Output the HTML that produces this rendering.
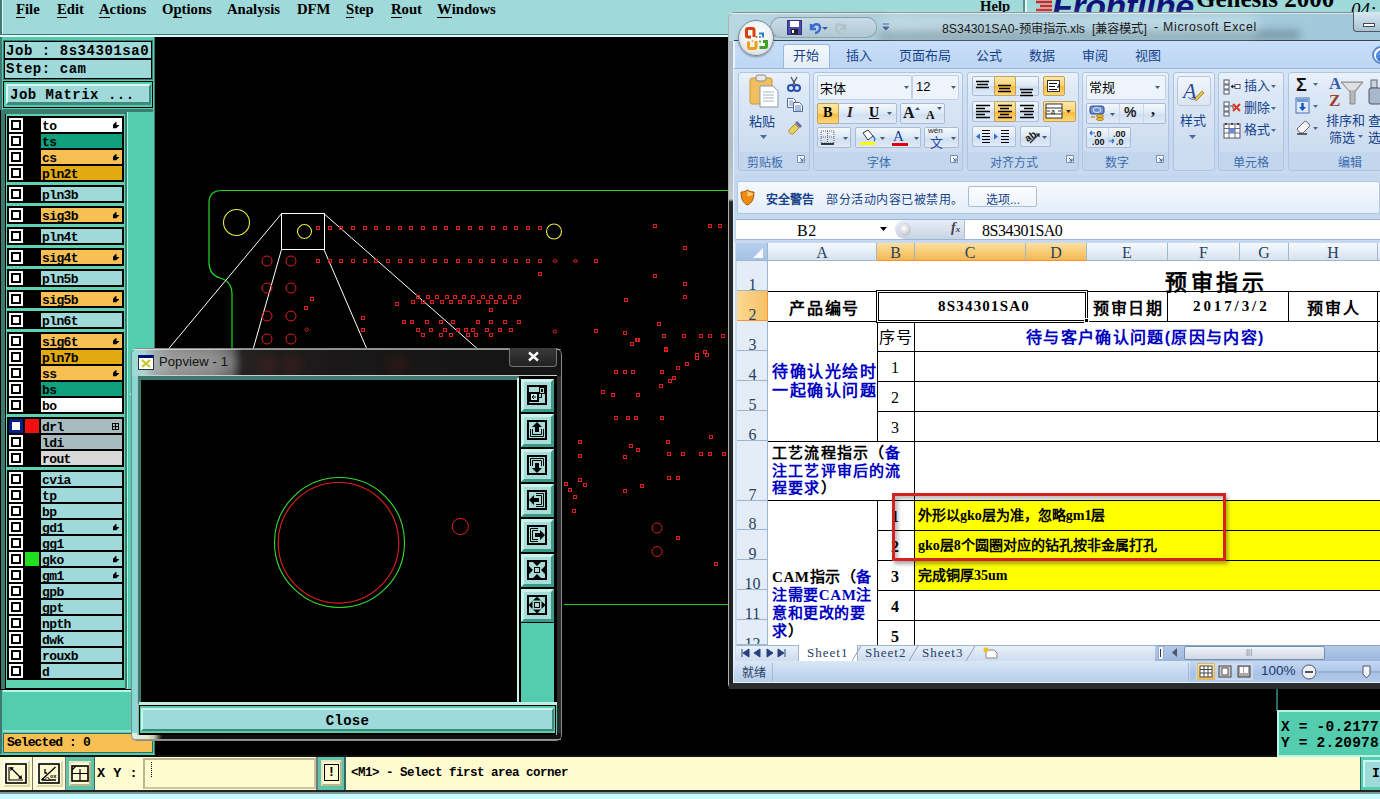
<!DOCTYPE html><html lang="zh-CN"><head><meta charset="utf-8"><style>
*,*:before,*:after{margin:0;padding:0;box-sizing:border-box}
html,body{width:1380px;height:799px;overflow:hidden;background:#000;position:relative;font-family:"Liberation Sans",sans-serif}
.a{position:absolute}
.mono{font-family:"Liberation Mono",monospace;font-weight:bold}
.mi{position:absolute;top:1px;font-family:"Liberation Serif",serif;font-weight:bold;font-size:14.7px;color:#000;line-height:17px}
.mi u{text-decoration:none;border-bottom:1px solid #000;display:inline-block;line-height:15px}
.cb{position:absolute;width:14px;height:14px;background:#fff}
.cb:after{content:"";position:absolute;left:2px;top:2px;width:10px;height:10px;border:2px solid #000}
.ln{position:absolute;height:14px;font-family:"Liberation Mono",monospace;font-weight:bold;font-size:13px;line-height:17px;padding-left:1px;color:#000;letter-spacing:-0.6px;overflow:hidden}
.arr{position:absolute;left:72px;top:4px;width:7px;height:7px}
</style></head><body>
<div class="a" style="left:0;top:0;width:1380px;height:35px;background:#9fd9d9"></div>
<div class="a" style="left:0;top:0;width:2px;height:37px;background:#3d7a72"></div>
<div class="a" style="left:2px;top:0;width:1px;height:35px;background:#e8ffff"></div>
<div class="a" style="left:2px;top:34px;width:1378px;height:1px;background:#3d7a72"></div>
<div class="a" style="left:0;top:35px;width:1380px;height:2px;background:#e0fafa"></div>
<div class="mi" style="left:16px"><u>F</u>ile</div>
<div class="mi" style="left:57px"><u>E</u>dit</div>
<div class="mi" style="left:99px"><u>A</u>ctions</div>
<div class="mi" style="left:162px">O<u>p</u>tions</div>
<div class="mi" style="left:227px">Analysis</div>
<div class="mi" style="left:297px">DFM</div>
<div class="mi" style="left:346px"><u>S</u>tep</div>
<div class="mi" style="left:391px"><u>R</u>out</div>
<div class="mi" style="left:437px"><u>W</u>indows</div>
<div class="mi" style="left:980px;top:-2px">Help</div>
<div class="a" style="left:1023px;top:0;width:2px;height:34px;background:#5a8a88"></div><div class="a" style="left:1025px;top:0;width:2px;height:34px;background:#e0f8f8"></div>
<svg class="a" style="left:1034px;top:0" width="20" height="14"><path d="M2 2 h16 M6 6 h12 M2 10 h16" stroke="#e02020" stroke-width="2.5"/></svg>
<div class="a" style="left:1052px;top:-11px;font:italic bold 34px/34px Liberation Sans;color:#10107a;letter-spacing:-0.4px">Frontline</div>
<div class="a" style="left:1196px;top:-14px;font:bold 25px/25px Liberation Serif;color:#000">Genesis 2000</div>
<div class="a" style="left:1351px;top:-1px;font:italic 19px/22px Liberation Serif;color:#000">04:</div>
<div class="a" style="left:0;top:37px;width:155px;height:720px;background:#53cdae"></div>
<div class="a" style="left:0;top:37px;width:2px;height:720px;background:#3d7a72"></div>
<div class="a" style="left:3px;top:40px;width:150px;height:40px;background:#3d7a72"></div>
<div class="a mono" style="left:4px;top:41px;width:148px;height:18px;background:#a0d9d9;border:1px solid #000;font-size:14px;line-height:19px;padding-left:1px;letter-spacing:0.55px">Job : 8s34301sa0</div>
<div class="a mono" style="left:4px;top:59px;width:148px;height:20px;background:#a0d9d9;border:1px solid #000;font-size:14px;line-height:19px;padding-left:1px;letter-spacing:0.55px">Step: cam</div>
<div class="a" style="left:3px;top:81px;width:150px;height:27px;background:#53cdae;border:1px solid #000"></div>
<div class="a mono" style="left:6px;top:84px;width:145px;height:21px;background:#a0d9d9;border-top:2px solid #d8f8f8;border-left:2px solid #d8f8f8;border-bottom:3px solid #3d8a7a;border-right:2px solid #3d8a7a;font-size:14px;line-height:19px;padding-left:2px;letter-spacing:0.5px">Job Matrix ...</div>
<div class="a" style="left:3px;top:109px;width:150px;height:3px;background:#3d7a72"></div>
<div class="a" style="left:0;top:110px;width:1px;height:580px;background:#000"></div>
<div class="a" style="left:1px;top:110px;width:4px;height:580px;background:#3d7a6e"></div>
<div class="a" style="left:1px;top:110px;width:126px;height:4px;background:#3d7a6e"></div>
<div class="a" style="left:5px;top:114px;width:1px;height:575px;background:#000"></div>
<div class="a" style="left:5px;top:688px;width:122px;height:1px;background:#000"></div>
<div class="a" style="left:6px;top:114px;width:119px;height:574px;background:#5fd2b2"></div>
<div class="a" style="left:125px;top:114px;width:2px;height:575px;background:#3d7a6e"></div>
<div class="a" style="left:127px;top:112px;width:1px;height:577px;background:#a8f4e4"></div>
<div class="a" style="left:128px;top:112px;width:26px;height:577px;background:#53cdae"></div>
<div class="a" style="left:154px;top:37px;width:1px;height:720px;background:#3d7a6e"></div>
<div class="a" style="left:7px;top:116px;width:117px;height:66px;background:#000"></div>
<div class="cb" style="left:9px;top:118px"></div>
<div class="ln" style="left:41px;top:118px;width:81px;background:#ffffff">to<svg class="arr" viewBox="0 0 8 8"><path d="M0 3 L3.2 0 H4 V3.4 H7 V4 L3.6 7 H0 Z" fill="#000"/></svg></div>
<div class="cb" style="left:9px;top:134px"></div>
<div class="ln" style="left:41px;top:134px;width:81px;background:#10a07e">ts</div>
<div class="cb" style="left:9px;top:150px"></div>
<div class="ln" style="left:41px;top:150px;width:81px;background:#f8c052">cs<svg class="arr" viewBox="0 0 8 8"><path d="M0 3 L3.2 0 H4 V3.4 H7 V4 L3.6 7 H0 Z" fill="#000"/></svg></div>
<div class="cb" style="left:9px;top:166px"></div>
<div class="ln" style="left:41px;top:166px;width:81px;background:#e0aa10">pln2t</div>
<div class="a" style="left:7px;top:185px;width:117px;height:18px;background:#000"></div>
<div class="cb" style="left:9px;top:187px"></div>
<div class="ln" style="left:41px;top:187px;width:81px;background:#a0d9d9">pln3b</div>
<div class="a" style="left:7px;top:206px;width:117px;height:18px;background:#000"></div>
<div class="cb" style="left:9px;top:208px"></div>
<div class="ln" style="left:41px;top:208px;width:81px;background:#f8c052">sig3b<svg class="arr" viewBox="0 0 8 8"><path d="M0 3 L3.2 0 H4 V3.4 H7 V4 L3.6 7 H0 Z" fill="#000"/></svg></div>
<div class="a" style="left:7px;top:227px;width:117px;height:18px;background:#000"></div>
<div class="cb" style="left:9px;top:229px"></div>
<div class="ln" style="left:41px;top:229px;width:81px;background:#a0d9d9">pln4t</div>
<div class="a" style="left:7px;top:248px;width:117px;height:18px;background:#000"></div>
<div class="cb" style="left:9px;top:250px"></div>
<div class="ln" style="left:41px;top:250px;width:81px;background:#f8c052">sig4t<svg class="arr" viewBox="0 0 8 8"><path d="M0 3 L3.2 0 H4 V3.4 H7 V4 L3.6 7 H0 Z" fill="#000"/></svg></div>
<div class="a" style="left:7px;top:269px;width:117px;height:18px;background:#000"></div>
<div class="cb" style="left:9px;top:271px"></div>
<div class="ln" style="left:41px;top:271px;width:81px;background:#a0d9d9">pln5b</div>
<div class="a" style="left:7px;top:290px;width:117px;height:18px;background:#000"></div>
<div class="cb" style="left:9px;top:292px"></div>
<div class="ln" style="left:41px;top:292px;width:81px;background:#f8c052">sig5b<svg class="arr" viewBox="0 0 8 8"><path d="M0 3 L3.2 0 H4 V3.4 H7 V4 L3.6 7 H0 Z" fill="#000"/></svg></div>
<div class="a" style="left:7px;top:311px;width:117px;height:18px;background:#000"></div>
<div class="cb" style="left:9px;top:313px"></div>
<div class="ln" style="left:41px;top:313px;width:81px;background:#a0d9d9">pln6t</div>
<div class="a" style="left:7px;top:332px;width:117px;height:82px;background:#000"></div>
<div class="cb" style="left:9px;top:334px"></div>
<div class="ln" style="left:41px;top:334px;width:81px;background:#f8c052">sig6t<svg class="arr" viewBox="0 0 8 8"><path d="M0 3 L3.2 0 H4 V3.4 H7 V4 L3.6 7 H0 Z" fill="#000"/></svg></div>
<div class="cb" style="left:9px;top:350px"></div>
<div class="ln" style="left:41px;top:350px;width:81px;background:#e0aa10">pln7b</div>
<div class="cb" style="left:9px;top:366px"></div>
<div class="ln" style="left:41px;top:366px;width:81px;background:#f8c052">ss<svg class="arr" viewBox="0 0 8 8"><path d="M0 3 L3.2 0 H4 V3.4 H7 V4 L3.6 7 H0 Z" fill="#000"/></svg></div>
<div class="cb" style="left:9px;top:382px"></div>
<div class="ln" style="left:41px;top:382px;width:81px;background:#10a07e">bs</div>
<div class="cb" style="left:9px;top:398px"></div>
<div class="ln" style="left:41px;top:398px;width:81px;background:#ffffff">bo</div>
<div class="a" style="left:7px;top:417px;width:117px;height:50px;background:#000"></div>
<div class="cb" style="left:9px;top:419px"></div>
<div class="a" style="left:9px;top:419px;width:14px;height:14px;background:#00208a"></div><div class="a" style="left:12px;top:422px;width:8px;height:8px;background:#fff"></div>
<div class="a" style="left:25px;top:419px;width:14px;height:14px;background:#f01010"></div>
<div class="ln" style="left:41px;top:419px;width:81px;background:#a8bcc0">drl<div class="a" style="right:3px;top:4px;width:7px;height:7px;border:1px solid #000;font-size:0"><div class="a" style="left:2px;top:0;width:1px;height:5px;background:#000"></div><div class="a" style="left:0;top:2px;width:5px;height:1px;background:#000"></div></div></div>
<div class="cb" style="left:9px;top:435px"></div>
<div class="ln" style="left:41px;top:435px;width:81px;background:#a8bcc0">ldi</div>
<div class="cb" style="left:9px;top:451px"></div>
<div class="ln" style="left:41px;top:451px;width:81px;background:#d8d8d8">rout</div>
<div class="a" style="left:7px;top:470px;width:117px;height:210px;background:#000"></div>
<div class="cb" style="left:9px;top:472px"></div>
<div class="ln" style="left:41px;top:472px;width:81px;background:#a0d9d9">cvia</div>
<div class="cb" style="left:9px;top:488px"></div>
<div class="ln" style="left:41px;top:488px;width:81px;background:#a0d9d9">tp</div>
<div class="cb" style="left:9px;top:504px"></div>
<div class="ln" style="left:41px;top:504px;width:81px;background:#a0d9d9">bp</div>
<div class="cb" style="left:9px;top:520px"></div>
<div class="ln" style="left:41px;top:520px;width:81px;background:#a0d9d9">gd1<svg class="arr" viewBox="0 0 8 8"><path d="M0 3 L3.2 0 H4 V3.4 H7 V4 L3.6 7 H0 Z" fill="#000"/></svg></div>
<div class="cb" style="left:9px;top:536px"></div>
<div class="ln" style="left:41px;top:536px;width:81px;background:#a0d9d9">gg1</div>
<div class="cb" style="left:9px;top:552px"></div>
<div class="a" style="left:25px;top:552px;width:14px;height:14px;background:#20e020"></div>
<div class="ln" style="left:41px;top:552px;width:81px;background:#a0d9d9">gko<svg class="arr" viewBox="0 0 8 8"><path d="M0 3 L3.2 0 H4 V3.4 H7 V4 L3.6 7 H0 Z" fill="#000"/></svg></div>
<div class="cb" style="left:9px;top:568px"></div>
<div class="ln" style="left:41px;top:568px;width:81px;background:#a0d9d9">gm1<svg class="arr" viewBox="0 0 8 8"><path d="M0 3 L3.2 0 H4 V3.4 H7 V4 L3.6 7 H0 Z" fill="#000"/></svg></div>
<div class="cb" style="left:9px;top:584px"></div>
<div class="ln" style="left:41px;top:584px;width:81px;background:#a0d9d9">gpb</div>
<div class="cb" style="left:9px;top:600px"></div>
<div class="ln" style="left:41px;top:600px;width:81px;background:#a0d9d9">gpt</div>
<div class="cb" style="left:9px;top:616px"></div>
<div class="ln" style="left:41px;top:616px;width:81px;background:#a0d9d9">npth</div>
<div class="cb" style="left:9px;top:632px"></div>
<div class="ln" style="left:41px;top:632px;width:81px;background:#a0d9d9">dwk</div>
<div class="cb" style="left:9px;top:648px"></div>
<div class="ln" style="left:41px;top:648px;width:81px;background:#a0d9d9">rouxb</div>
<div class="cb" style="left:9px;top:664px"></div>
<div class="ln" style="left:41px;top:664px;width:81px;background:#a0d9d9">d</div>
<div class="a" style="left:0;top:689px;width:154px;height:1px;background:#000"></div>
<div class="a" style="left:3px;top:690px;width:151px;height:2px;background:#b0f8e8"></div>
<div class="a" style="left:3px;top:730px;width:151px;height:2px;background:#8fe3d3"></div>
<div class="a mono" style="left:3px;top:733px;width:150px;height:20px;background:#f8c052;border:1px solid #2f6a62;font-size:13px;line-height:18px;padding-left:3px;letter-spacing:-0.9px">Selected : 0</div>
<div class="a" style="left:0;top:754px;width:155px;height:3px;background:#53cdae"></div>
<svg class="a" style="left:0;top:0" width="1380" height="799" viewBox="0 0 1380 799"><path d="M232 700 L232 295 Q232 281 220 278 Q209 275 209 262 L209 203 Q209 190.5 222 190.5 L1380 190.5" fill="none" stroke="#22dd22" stroke-width="1.2"/><line x1="564" y1="604.5" x2="730" y2="604.5" stroke="#22cc22" stroke-width="1.2"/><circle cx="236.5" cy="222.5" r="13" fill="none" stroke="#e8e840" stroke-width="1.1"/><circle cx="304.5" cy="231.5" r="7" fill="none" stroke="#e8e840" stroke-width="1.1"/><circle cx="554" cy="231.5" r="7.5" fill="none" stroke="#e8e840" stroke-width="1.1"/><rect x="281.5" y="213.5" width="43" height="36" fill="none" stroke="#fff" stroke-width="1"/><line x1="281.5" y1="213.7" x2="130" y2="395" stroke="#fff" stroke-width="1"/><line x1="281.5" y1="249.6" x2="240" y2="395" stroke="#fff" stroke-width="1"/><line x1="324" y1="249.6" x2="386.7" y2="395" stroke="#fff" stroke-width="1"/><line x1="324" y1="213.7" x2="530" y2="395" stroke="#fff" stroke-width="1"/><rect x="316.5" y="226.5" width="3" height="3" fill="none" stroke="#e02020" stroke-width="1"/><rect x="316.5" y="259.5" width="3" height="3" fill="none" stroke="#e02020" stroke-width="1"/><rect x="328.5" y="226.5" width="3" height="3" fill="none" stroke="#e02020" stroke-width="1"/><rect x="328.5" y="259.5" width="3" height="3" fill="none" stroke="#e02020" stroke-width="1"/><rect x="339.5" y="226.5" width="3" height="3" fill="none" stroke="#e02020" stroke-width="1"/><rect x="339.5" y="259.5" width="3" height="3" fill="none" stroke="#e02020" stroke-width="1"/><rect x="351.5" y="226.5" width="3" height="3" fill="none" stroke="#e02020" stroke-width="1"/><rect x="351.5" y="259.5" width="3" height="3" fill="none" stroke="#e02020" stroke-width="1"/><rect x="363.5" y="226.5" width="3" height="3" fill="none" stroke="#e02020" stroke-width="1"/><rect x="363.5" y="259.5" width="3" height="3" fill="none" stroke="#e02020" stroke-width="1"/><rect x="374.5" y="226.5" width="3" height="3" fill="none" stroke="#e02020" stroke-width="1"/><rect x="374.5" y="259.5" width="3" height="3" fill="none" stroke="#e02020" stroke-width="1"/><rect x="386.5" y="226.5" width="3" height="3" fill="none" stroke="#e02020" stroke-width="1"/><rect x="386.5" y="259.5" width="3" height="3" fill="none" stroke="#e02020" stroke-width="1"/><rect x="398.5" y="226.5" width="3" height="3" fill="none" stroke="#e02020" stroke-width="1"/><rect x="398.5" y="259.5" width="3" height="3" fill="none" stroke="#e02020" stroke-width="1"/><rect x="409.5" y="226.5" width="3" height="3" fill="none" stroke="#e02020" stroke-width="1"/><rect x="409.5" y="259.5" width="3" height="3" fill="none" stroke="#e02020" stroke-width="1"/><rect x="421.5" y="226.5" width="3" height="3" fill="none" stroke="#e02020" stroke-width="1"/><rect x="421.5" y="259.5" width="3" height="3" fill="none" stroke="#e02020" stroke-width="1"/><rect x="433.5" y="226.5" width="3" height="3" fill="none" stroke="#e02020" stroke-width="1"/><rect x="433.5" y="259.5" width="3" height="3" fill="none" stroke="#e02020" stroke-width="1"/><rect x="444.5" y="226.5" width="3" height="3" fill="none" stroke="#e02020" stroke-width="1"/><rect x="444.5" y="259.5" width="3" height="3" fill="none" stroke="#e02020" stroke-width="1"/><rect x="456.5" y="226.5" width="3" height="3" fill="none" stroke="#e02020" stroke-width="1"/><rect x="456.5" y="259.5" width="3" height="3" fill="none" stroke="#e02020" stroke-width="1"/><rect x="468.5" y="226.5" width="3" height="3" fill="none" stroke="#e02020" stroke-width="1"/><rect x="468.5" y="259.5" width="3" height="3" fill="none" stroke="#e02020" stroke-width="1"/><rect x="479.5" y="226.5" width="3" height="3" fill="none" stroke="#e02020" stroke-width="1"/><rect x="479.5" y="259.5" width="3" height="3" fill="none" stroke="#e02020" stroke-width="1"/><rect x="491.5" y="226.5" width="3" height="3" fill="none" stroke="#e02020" stroke-width="1"/><rect x="491.5" y="259.5" width="3" height="3" fill="none" stroke="#e02020" stroke-width="1"/><rect x="503.5" y="226.5" width="3" height="3" fill="none" stroke="#e02020" stroke-width="1"/><rect x="503.5" y="259.5" width="3" height="3" fill="none" stroke="#e02020" stroke-width="1"/><rect x="514.5" y="226.5" width="3" height="3" fill="none" stroke="#e02020" stroke-width="1"/><rect x="514.5" y="259.5" width="3" height="3" fill="none" stroke="#e02020" stroke-width="1"/><rect x="526.5" y="226.5" width="3" height="3" fill="none" stroke="#e02020" stroke-width="1"/><rect x="526.5" y="259.5" width="3" height="3" fill="none" stroke="#e02020" stroke-width="1"/><rect x="538.5" y="226.5" width="3" height="3" fill="none" stroke="#e02020" stroke-width="1"/><rect x="538.5" y="259.5" width="3" height="3" fill="none" stroke="#e02020" stroke-width="1"/><ellipse cx="555" cy="261" rx="2" ry="1.3" fill="none" stroke="#e02020"/><ellipse cx="575.5" cy="261" rx="2" ry="1.3" fill="none" stroke="#e02020"/><ellipse cx="555" cy="331.6" rx="1.8" ry="1.5" fill="none" stroke="#e02020"/><rect x="594.5" y="259.5" width="3" height="3" fill="none" stroke="#e02020" stroke-width="1"/><circle cx="267.0" cy="261.0" r="5" fill="none" stroke="#e02020" stroke-width="1"/><circle cx="291.0" cy="261.0" r="5" fill="none" stroke="#e02020" stroke-width="1"/><circle cx="267.0" cy="288.0" r="5" fill="none" stroke="#e02020" stroke-width="1"/><circle cx="291.0" cy="288.0" r="5" fill="none" stroke="#e02020" stroke-width="1"/><circle cx="267.0" cy="316.0" r="5" fill="none" stroke="#e02020" stroke-width="1"/><circle cx="291.0" cy="316.0" r="5" fill="none" stroke="#e02020" stroke-width="1"/><circle cx="267.0" cy="339.0" r="5" fill="none" stroke="#e02020" stroke-width="1"/><circle cx="291.0" cy="339.0" r="5" fill="none" stroke="#e02020" stroke-width="1"/><path d="M306.7 327.6 L308.7 329.6 L306.7 331.6 L304.7 329.6 Z" fill="none" stroke="#e02020"/><rect x="653.5" y="224.5" width="3" height="3" fill="none" stroke="#e02020" stroke-width="1"/><rect x="708.5" y="224.5" width="3" height="3" fill="none" stroke="#e02020" stroke-width="1"/><rect x="718.5" y="224.5" width="3" height="3" fill="none" stroke="#e02020" stroke-width="1"/><rect x="683.5" y="246.5" width="3" height="3" fill="none" stroke="#e02020" stroke-width="1"/><rect x="538.5" y="272.5" width="3" height="3" fill="none" stroke="#e02020" stroke-width="1"/><rect x="653.5" y="274.5" width="3" height="3" fill="none" stroke="#e02020" stroke-width="1"/><rect x="683.5" y="282.5" width="3" height="3" fill="none" stroke="#e02020" stroke-width="1"/><rect x="683.5" y="295.5" width="3" height="3" fill="none" stroke="#e02020" stroke-width="1"/><rect x="624.5" y="298.5" width="3" height="3" fill="none" stroke="#e02020" stroke-width="1"/><rect x="657.5" y="322.5" width="3" height="3" fill="none" stroke="#e02020" stroke-width="1"/><rect x="594.5" y="329.5" width="3" height="3" fill="none" stroke="#e02020" stroke-width="1"/><rect x="623.5" y="331.5" width="3" height="3" fill="none" stroke="#e02020" stroke-width="1"/><rect x="630.5" y="342.5" width="3" height="3" fill="none" stroke="#e02020" stroke-width="1"/><rect x="635.5" y="338.5" width="3" height="3" fill="none" stroke="#e02020" stroke-width="1"/><rect x="662.5" y="334.5" width="3" height="3" fill="none" stroke="#e02020" stroke-width="1"/><rect x="682.5" y="334.5" width="3" height="3" fill="none" stroke="#e02020" stroke-width="1"/><rect x="699.5" y="334.5" width="3" height="3" fill="none" stroke="#e02020" stroke-width="1"/><rect x="708.5" y="334.5" width="3" height="3" fill="none" stroke="#e02020" stroke-width="1"/><rect x="721.5" y="334.5" width="3" height="3" fill="none" stroke="#e02020" stroke-width="1"/><rect x="664.5" y="347.5" width="3" height="3" fill="none" stroke="#e02020" stroke-width="1"/><rect x="695.5" y="353.5" width="3" height="3" fill="none" stroke="#e02020" stroke-width="1"/><rect x="703.5" y="350.5" width="3" height="3" fill="none" stroke="#e02020" stroke-width="1"/><rect x="395.5" y="302.5" width="3" height="3" fill="none" stroke="#e02020" stroke-width="1"/><rect x="489.5" y="308.5" width="3" height="3" fill="none" stroke="#e02020" stroke-width="1"/><rect x="361.5" y="316.5" width="3" height="3" fill="none" stroke="#e02020" stroke-width="1"/><rect x="361.5" y="328.5" width="3" height="3" fill="none" stroke="#e02020" stroke-width="1"/><rect x="310.5" y="297.5" width="3" height="3" fill="none" stroke="#e02020" stroke-width="1"/><rect x="304.5" y="306.5" width="3" height="3" fill="none" stroke="#e02020" stroke-width="1"/><rect x="416.5" y="295.5" width="3" height="3" fill="none" stroke="#e02020" stroke-width="1"/><rect x="426.5" y="295.5" width="3" height="3" fill="none" stroke="#e02020" stroke-width="1"/><rect x="435.5" y="295.5" width="3" height="3" fill="none" stroke="#e02020" stroke-width="1"/><rect x="445.5" y="295.5" width="3" height="3" fill="none" stroke="#e02020" stroke-width="1"/><rect x="453.5" y="295.5" width="3" height="3" fill="none" stroke="#e02020" stroke-width="1"/><rect x="462.5" y="295.5" width="3" height="3" fill="none" stroke="#e02020" stroke-width="1"/><rect x="471.5" y="295.5" width="3" height="3" fill="none" stroke="#e02020" stroke-width="1"/><rect x="481.5" y="295.5" width="3" height="3" fill="none" stroke="#e02020" stroke-width="1"/><rect x="489.5" y="295.5" width="3" height="3" fill="none" stroke="#e02020" stroke-width="1"/><rect x="498.5" y="295.5" width="3" height="3" fill="none" stroke="#e02020" stroke-width="1"/><rect x="508.5" y="295.5" width="3" height="3" fill="none" stroke="#e02020" stroke-width="1"/><rect x="517.5" y="295.5" width="3" height="3" fill="none" stroke="#e02020" stroke-width="1"/><rect x="411.5" y="300.5" width="3" height="3" fill="none" stroke="#e02020" stroke-width="1"/><rect x="421.5" y="300.5" width="3" height="3" fill="none" stroke="#e02020" stroke-width="1"/><rect x="430.5" y="300.5" width="3" height="3" fill="none" stroke="#e02020" stroke-width="1"/><rect x="440.5" y="300.5" width="3" height="3" fill="none" stroke="#e02020" stroke-width="1"/><rect x="449.5" y="300.5" width="3" height="3" fill="none" stroke="#e02020" stroke-width="1"/><rect x="458.5" y="300.5" width="3" height="3" fill="none" stroke="#e02020" stroke-width="1"/><rect x="468.5" y="300.5" width="3" height="3" fill="none" stroke="#e02020" stroke-width="1"/><rect x="477.5" y="300.5" width="3" height="3" fill="none" stroke="#e02020" stroke-width="1"/><rect x="486.5" y="300.5" width="3" height="3" fill="none" stroke="#e02020" stroke-width="1"/><rect x="494.5" y="300.5" width="3" height="3" fill="none" stroke="#e02020" stroke-width="1"/><rect x="503.5" y="300.5" width="3" height="3" fill="none" stroke="#e02020" stroke-width="1"/><rect x="513.5" y="300.5" width="3" height="3" fill="none" stroke="#e02020" stroke-width="1"/><rect x="402.5" y="320.5" width="3" height="3" fill="none" stroke="#e02020" stroke-width="1"/><rect x="410.5" y="320.5" width="3" height="3" fill="none" stroke="#e02020" stroke-width="1"/><rect x="425.5" y="320.5" width="3" height="3" fill="none" stroke="#e02020" stroke-width="1"/><rect x="439.5" y="320.5" width="3" height="3" fill="none" stroke="#e02020" stroke-width="1"/><rect x="451.5" y="320.5" width="3" height="3" fill="none" stroke="#e02020" stroke-width="1"/><rect x="476.5" y="320.5" width="3" height="3" fill="none" stroke="#e02020" stroke-width="1"/><rect x="489.5" y="320.5" width="3" height="3" fill="none" stroke="#e02020" stroke-width="1"/><rect x="503.5" y="320.5" width="3" height="3" fill="none" stroke="#e02020" stroke-width="1"/><rect x="517.5" y="320.5" width="3" height="3" fill="none" stroke="#e02020" stroke-width="1"/><rect x="416.5" y="328.5" width="3" height="3" fill="none" stroke="#e02020" stroke-width="1"/><rect x="429.5" y="328.5" width="3" height="3" fill="none" stroke="#e02020" stroke-width="1"/><rect x="443.5" y="328.5" width="3" height="3" fill="none" stroke="#e02020" stroke-width="1"/><rect x="456.5" y="328.5" width="3" height="3" fill="none" stroke="#e02020" stroke-width="1"/><rect x="464.5" y="328.5" width="3" height="3" fill="none" stroke="#e02020" stroke-width="1"/><rect x="471.5" y="328.5" width="3" height="3" fill="none" stroke="#e02020" stroke-width="1"/><rect x="485.5" y="328.5" width="3" height="3" fill="none" stroke="#e02020" stroke-width="1"/><rect x="498.5" y="328.5" width="3" height="3" fill="none" stroke="#e02020" stroke-width="1"/><rect x="509.5" y="328.5" width="3" height="3" fill="none" stroke="#e02020" stroke-width="1"/><rect x="421.5" y="333.5" width="3" height="3" fill="none" stroke="#e02020" stroke-width="1"/><rect x="439.5" y="333.5" width="3" height="3" fill="none" stroke="#e02020" stroke-width="1"/><rect x="449.5" y="333.5" width="3" height="3" fill="none" stroke="#e02020" stroke-width="1"/><rect x="466.5" y="333.5" width="3" height="3" fill="none" stroke="#e02020" stroke-width="1"/><rect x="474.5" y="333.5" width="3" height="3" fill="none" stroke="#e02020" stroke-width="1"/><rect x="489.5" y="333.5" width="3" height="3" fill="none" stroke="#e02020" stroke-width="1"/><rect x="630.5" y="342.5" width="3" height="3" fill="none" stroke="#e02020" stroke-width="1"/><rect x="636.5" y="338.5" width="3" height="3" fill="none" stroke="#e02020" stroke-width="1"/><rect x="664.5" y="348.5" width="3" height="3" fill="none" stroke="#e02020" stroke-width="1"/><rect x="705.5" y="353.5" width="3" height="3" fill="none" stroke="#e02020" stroke-width="1"/><rect x="695.5" y="356.5" width="3" height="3" fill="none" stroke="#e02020" stroke-width="1"/><rect x="685.5" y="362.5" width="3" height="3" fill="none" stroke="#e02020" stroke-width="1"/><rect x="676.5" y="366.5" width="3" height="3" fill="none" stroke="#e02020" stroke-width="1"/><rect x="614.5" y="370.5" width="3" height="3" fill="none" stroke="#e02020" stroke-width="1"/><rect x="623.5" y="370.5" width="3" height="3" fill="none" stroke="#e02020" stroke-width="1"/><rect x="631.5" y="370.5" width="3" height="3" fill="none" stroke="#e02020" stroke-width="1"/><rect x="660.5" y="370.5" width="3" height="3" fill="none" stroke="#e02020" stroke-width="1"/><rect x="672.5" y="376.5" width="3" height="3" fill="none" stroke="#e02020" stroke-width="1"/><rect x="668.5" y="379.5" width="3" height="3" fill="none" stroke="#e02020" stroke-width="1"/><rect x="659.5" y="384.5" width="3" height="3" fill="none" stroke="#e02020" stroke-width="1"/><rect x="601.5" y="390.5" width="3" height="3" fill="none" stroke="#e02020" stroke-width="1"/><rect x="611.5" y="393.5" width="3" height="3" fill="none" stroke="#e02020" stroke-width="1"/><rect x="636.5" y="393.5" width="3" height="3" fill="none" stroke="#e02020" stroke-width="1"/><rect x="614.5" y="416.5" width="3" height="3" fill="none" stroke="#e02020" stroke-width="1"/><rect x="626.5" y="416.5" width="3" height="3" fill="none" stroke="#e02020" stroke-width="1"/><rect x="634.5" y="416.5" width="3" height="3" fill="none" stroke="#e02020" stroke-width="1"/><rect x="660.5" y="416.5" width="3" height="3" fill="none" stroke="#e02020" stroke-width="1"/><rect x="578.5" y="440.5" width="3" height="3" fill="none" stroke="#e02020" stroke-width="1"/><rect x="709.5" y="435.5" width="3" height="3" fill="none" stroke="#e02020" stroke-width="1"/><rect x="666.5" y="440.5" width="3" height="3" fill="none" stroke="#e02020" stroke-width="1"/><rect x="629.5" y="444.5" width="3" height="3" fill="none" stroke="#e02020" stroke-width="1"/><rect x="636.5" y="448.5" width="3" height="3" fill="none" stroke="#e02020" stroke-width="1"/><rect x="623.5" y="455.5" width="3" height="3" fill="none" stroke="#e02020" stroke-width="1"/><rect x="578.5" y="454.5" width="3" height="3" fill="none" stroke="#e02020" stroke-width="1"/><rect x="667.5" y="452.5" width="3" height="3" fill="none" stroke="#e02020" stroke-width="1"/><rect x="681.5" y="452.5" width="3" height="3" fill="none" stroke="#e02020" stroke-width="1"/><rect x="699.5" y="452.5" width="3" height="3" fill="none" stroke="#e02020" stroke-width="1"/><rect x="708.5" y="452.5" width="3" height="3" fill="none" stroke="#e02020" stroke-width="1"/><rect x="722.5" y="452.5" width="3" height="3" fill="none" stroke="#e02020" stroke-width="1"/><rect x="578.5" y="478.5" width="3" height="3" fill="none" stroke="#e02020" stroke-width="1"/><rect x="667.5" y="476.5" width="3" height="3" fill="none" stroke="#e02020" stroke-width="1"/><rect x="676.5" y="476.5" width="3" height="3" fill="none" stroke="#e02020" stroke-width="1"/><rect x="564.5" y="482.5" width="3" height="3" fill="none" stroke="#e02020" stroke-width="1"/><rect x="568.5" y="488.5" width="3" height="3" fill="none" stroke="#e02020" stroke-width="1"/><rect x="583.5" y="483.5" width="3" height="3" fill="none" stroke="#e02020" stroke-width="1"/><rect x="573.5" y="495.5" width="3" height="3" fill="none" stroke="#e02020" stroke-width="1"/><rect x="623.5" y="489.5" width="3" height="3" fill="none" stroke="#e02020" stroke-width="1"/><rect x="640.5" y="484.5" width="3" height="3" fill="none" stroke="#e02020" stroke-width="1"/><rect x="572.5" y="509.5" width="3" height="3" fill="none" stroke="#e02020" stroke-width="1"/><rect x="676.5" y="536.5" width="3" height="3" fill="none" stroke="#e02020" stroke-width="1"/><rect x="714.5" y="562.5" width="3" height="3" fill="none" stroke="#e02020" stroke-width="1"/><circle cx="657.0" cy="528.0" r="5" fill="none" stroke="#e02020" stroke-width="1"/><circle cx="657.0" cy="551.5" r="5" fill="none" stroke="#e02020" stroke-width="1"/></svg>
<div class="a" style="left:1276px;top:689px;width:2px;height:22px;background:#2f6a62"></div>
<div class="a" style="left:131px;top:348px;width:431px;height:393px;border-radius:7px 7px 6px 6px;background:linear-gradient(90deg,#7fd8d6 0px,#8fdcd8 8px,#2a2a2a 20px,#2a2a2a 100%);border:1px solid #8a8a8a"></div>
<div class="a" style="left:132px;top:349px;width:429px;height:27px;border-radius:6px 6px 0 0;overflow:hidden;background:linear-gradient(90deg,#9adcd8 0px,#a8d4d0 12px,#9aa8a6 24px,#8a8a8a 40px,#7a7a7a 80px,#5a5858 100px,#242222 110px,#1a1818 200px,#141414 100%)"><div class="a" style="left:20px;top:2px;width:85px;height:24px;border-radius:12px;background:rgba(190,190,190,0.35);filter:blur(5px)"></div><div class="a" style="left:125px;top:8px;width:20px;height:16px;border-radius:50%;background:rgba(150,30,30,0.2);filter:blur(5px)"></div><div class="a" style="left:150px;top:8px;width:20px;height:16px;border-radius:50%;background:rgba(150,30,30,0.2);filter:blur(5px)"></div><div class="a" style="left:255px;top:8px;width:22px;height:16px;border-radius:50%;background:rgba(140,30,30,0.18);filter:blur(5px)"></div></div>
<div class="a" style="left:132px;top:349px;width:429px;height:1px;background:rgba(255,255,255,0.55);border-radius:6px 6px 0 0"></div>
<div class="a" style="left:132px;top:733px;width:429px;height:7px;border-radius:0 0 5px 5px;background:linear-gradient(90deg,#d8f0e8 0px,#e8e8c8 15px,#c8c8a8 22px,#101010 30px,#111 100%)"></div>
<div class="a" style="left:132px;top:739px;width:429px;height:1px;background:#999"></div>
<div class="a" style="left:137px;top:375px;width:420px;height:360px;border:1px solid #bbb;border-top-color:#ccc"></div>
<div class="a" style="left:138px;top:355px;width:16px;height:15px;background:#fff;border:1px solid #333;border-top:3px solid #00107a"></div>
<svg class="a" style="left:140px;top:358px" width="12" height="11"><path d="M2 2 L10 9 M10 2 L2 9" stroke="#c8c830" stroke-width="2.2"/></svg>
<div class="a" style="left:159px;top:354px;font-size:13px;color:#111;letter-spacing:0.1px">Popview - 1</div>
<div class="a" style="left:509px;top:348px;width:48px;height:19px;border:1px solid #777;border-top:none;border-radius:0 0 4px 4px;background:linear-gradient(#3a3a3a,#222)"></div>
<svg class="a" style="left:527px;top:351px" width="13" height="11"><path d="M2 1.5 L11 9.5 M11 1.5 L2 9.5" stroke="#fff" stroke-width="2.4"/></svg>
<div class="a" style="left:138px;top:376px;width:419px;height:358px;background:#53cdae"></div>
<div class="a" style="left:138px;top:376px;width:381px;height:4px;background:#3d7a72"></div>
<div class="a" style="left:138px;top:376px;width:3px;height:328px;background:#3d7a72"></div>
<div class="a" style="left:141px;top:380px;width:376px;height:322px;background:#000"></div>
<div class="a" style="left:517px;top:378px;width:2px;height:326px;background:#c8f4ec"></div>
<div class="a" style="left:139px;top:702px;width:380px;height:2px;background:#c8f4ec"></div>
<div class="a" style="left:519px;top:376px;width:38px;height:328px;background:#000"></div>
<div class="a" style="left:521px;top:622px;width:33px;height:81px;background:#53cdae"></div>
<svg class="a" style="left:141px;top:380px" width="376" height="322"><circle cx="198.5" cy="162.5" r="65" fill="none" stroke="#33dd33" stroke-width="1.1"/><circle cx="197.5" cy="162.8" r="60.3" fill="none" stroke="#e02020" stroke-width="1.1"/><circle cx="319.3" cy="146.5" r="8.1" fill="none" stroke="#e02020" stroke-width="1"/></svg>
<div class="a" style="left:520px;top:378px;width:35px;height:35px;background:#53cdae;border:1px solid #000"></div>
<div class="a" style="left:521px;top:379px;width:33px;height:33px;background:#a8dcd8;border-top:3px solid #c8f4ec;border-left:3px solid #c8f4ec;border-bottom:3px solid #3a9a88;border-right:3px solid #3a9a88"></div>
<svg class="a" style="left:527px;top:385px" width="20" height="20" viewBox="0 0 20 20"><rect x="1" y="1" width="18" height="18" fill="none" stroke="#000" stroke-width="2"/><rect x="2" y="7" width="10" height="10" fill="#000"/><rect x="4" y="9" width="6" height="6" fill="#c8ece8"/><path d="M9 12 h-4 M7 10 l-2 2 2 2" stroke="#000" fill="none"/><rect x="12.5" y="2.5" width="5" height="6" fill="none" stroke="#000"/><rect x="14.5" y="4.5" width="1" height="2" fill="none" stroke="#000"/><path d="M12 12.5 h2.5 v-4" stroke="#000" fill="none"/></svg>
<div class="a" style="left:520px;top:413px;width:35px;height:35px;background:#53cdae;border:1px solid #000"></div>
<div class="a" style="left:521px;top:414px;width:33px;height:33px;background:#a8dcd8;border-top:3px solid #c8f4ec;border-left:3px solid #c8f4ec;border-bottom:3px solid #3a9a88;border-right:3px solid #3a9a88"></div>
<svg class="a" style="left:527px;top:420px" width="20" height="20" viewBox="0 0 20 20"><rect x="1" y="1" width="18" height="18" fill="none" stroke="#000" stroke-width="2"/><path d="M3.5 9 V16.5 H16.5 V9 M5.5 9 V14.5 H14.5 V9" stroke="#000" fill="none"/><path d="M10 2 L15 7 H12 V12 H8 V7 H5 Z" fill="#000"/></svg>
<div class="a" style="left:520px;top:448px;width:35px;height:35px;background:#53cdae;border:1px solid #000"></div>
<div class="a" style="left:521px;top:449px;width:33px;height:33px;background:#a8dcd8;border-top:3px solid #c8f4ec;border-left:3px solid #c8f4ec;border-bottom:3px solid #3a9a88;border-right:3px solid #3a9a88"></div>
<svg class="a" style="left:527px;top:455px" width="20" height="20" viewBox="0 0 20 20"><rect x="1" y="1" width="18" height="18" fill="none" stroke="#000" stroke-width="2"/><path d="M3.5 11 V3.5 H16.5 V11 M5.5 11 V5.5 H14.5 V11" stroke="#000" fill="none"/><path d="M10 18 L15 13 H12 V8 H8 V13 H5 Z" fill="#000"/></svg>
<div class="a" style="left:520px;top:483px;width:35px;height:35px;background:#53cdae;border:1px solid #000"></div>
<div class="a" style="left:521px;top:484px;width:33px;height:33px;background:#a8dcd8;border-top:3px solid #c8f4ec;border-left:3px solid #c8f4ec;border-bottom:3px solid #3a9a88;border-right:3px solid #3a9a88"></div>
<svg class="a" style="left:527px;top:490px" width="20" height="20" viewBox="0 0 20 20"><rect x="1" y="1" width="18" height="18" fill="none" stroke="#000" stroke-width="2"/><path d="M9 3.5 H16.5 V16.5 H9 M9 5.5 H14.5 V14.5 H9" stroke="#000" fill="none"/><path d="M2 10 L7 5 V8 H12 V12 H7 V15 Z" fill="#000"/></svg>
<div class="a" style="left:520px;top:518px;width:35px;height:35px;background:#53cdae;border:1px solid #000"></div>
<div class="a" style="left:521px;top:519px;width:33px;height:33px;background:#a8dcd8;border-top:3px solid #c8f4ec;border-left:3px solid #c8f4ec;border-bottom:3px solid #3a9a88;border-right:3px solid #3a9a88"></div>
<svg class="a" style="left:527px;top:525px" width="20" height="20" viewBox="0 0 20 20"><rect x="1" y="1" width="18" height="18" fill="none" stroke="#000" stroke-width="2"/><path d="M11 3.5 H3.5 V16.5 H11 M11 5.5 H5.5 V14.5 H11" stroke="#000" fill="none"/><path d="M18 10 L13 5 V8 H8 V12 H13 V15 Z" fill="#000"/></svg>
<div class="a" style="left:520px;top:553px;width:35px;height:35px;background:#53cdae;border:1px solid #000"></div>
<div class="a" style="left:521px;top:554px;width:33px;height:33px;background:#a8dcd8;border-top:3px solid #c8f4ec;border-left:3px solid #c8f4ec;border-bottom:3px solid #3a9a88;border-right:3px solid #3a9a88"></div>
<svg class="a" style="left:527px;top:560px" width="20" height="20" viewBox="0 0 20 20"><rect x="1" y="1" width="18" height="18" fill="none" stroke="#000" stroke-width="2"/><path d="M5 1 H15 L10 6 Z M5 19 H15 L10 14 Z M1 5 V15 L6 10 Z M19 5 V15 L14 10 Z" fill="#000"/><rect x="7.5" y="7.5" width="5" height="5" fill="none" stroke="#000"/></svg>
<div class="a" style="left:520px;top:588px;width:35px;height:35px;background:#53cdae;border:1px solid #000"></div>
<div class="a" style="left:521px;top:589px;width:33px;height:33px;background:#a8dcd8;border-top:3px solid #c8f4ec;border-left:3px solid #c8f4ec;border-bottom:3px solid #3a9a88;border-right:3px solid #3a9a88"></div>
<svg class="a" style="left:527px;top:595px" width="20" height="20" viewBox="0 0 20 20"><rect x="1" y="1" width="18" height="18" fill="none" stroke="#000" stroke-width="2"/><path d="M10 1.5 L14 5.5 H6 Z M10 18.5 L14 14.5 H6 Z M1.5 10 L5.5 6 V14 Z M18.5 10 L14.5 6 V14 Z" fill="#000"/><rect x="7.5" y="7.5" width="5" height="5" fill="none" stroke="#000"/></svg>
<div class="a" style="left:139px;top:702px;width:418px;height:3px;background:#c0f0e4"></div>
<div class="a" style="left:139px;top:705px;width:417px;height:30px;background:#000"></div>
<div class="a" style="left:140px;top:706px;width:415px;height:27px;background:#60c8a8"></div>
<div class="a mono" style="left:141px;top:708px;width:413px;height:23px;background:#9ddada;border-top:2px solid #c8f8f0;border-left:2px solid #c8f8f0;border-bottom:2px solid #3d8a7a;border-right:2px solid #3d8a7a;font-size:14px;line-height:22px;text-align:center;letter-spacing:0.3px">Close</div>
<div class="a" style="left:0;top:755px;width:1380px;height:2px;background:#111"></div>
<div class="a" style="left:0;top:757px;width:1380px;height:33px;background:#fffbd0"></div>
<div class="a" style="left:0px;top:757px;width:33px;height:33px;background:#fffbd0;border-right:1px solid #777"></div>
<div class="a" style="left:3px;top:760px;width:27px;height:27px;border:2px solid #d8d8b0;border-top-color:#fff;border-left-color:#fff"></div>
<svg class="a" style="left:5px;top:763px" width="22" height="21" viewBox="0 0 22 21"><rect x="1" y="1" width="20" height="19" fill="none" stroke="#000" stroke-width="1.6"/><path d="M4 4 V17 H18" stroke="#000" stroke-width="1.1" fill="none"/><path d="M6 5 L16 15" stroke="#000" stroke-width="1.2"/><path d="M5 4 l4 0.5 -3.5 3.5z M17 16 l-4 -0.5 3.5 -3.5z" fill="#000"/></svg>
<div class="a" style="left:33px;top:757px;width:33px;height:33px;background:#fffbd0;border-right:1px solid #777"></div>
<div class="a" style="left:36px;top:760px;width:27px;height:27px;border:2px solid #d8d8b0;border-top-color:#fff;border-left-color:#fff"></div>
<svg class="a" style="left:38px;top:763px" width="22" height="21" viewBox="0 0 22 21"><rect x="1" y="1" width="20" height="19" fill="none" stroke="#000" stroke-width="1.6"/><path d="M3.5 17 L17.5 4 M3.5 17 H18 M7 6 V10 H9" stroke="#000" stroke-width="1.3" fill="none"/><path d="M7 17 a3 3 0 0 1 4 -2 v2z" fill="#fff" stroke="#000" stroke-width="0.8"/><text x="12" y="15" font-size="5.5" font-family="Liberation Mono" font-weight="bold" fill="#000">ox</text></svg>
<div class="a" style="left:66px;top:757px;width:29px;height:33px;background:#5fc3a8;border-right:1px solid #2f6a62"></div>
<div class="a" style="left:69px;top:761px;width:22px;height:25px;background:#fffbd0;border:2px solid #b8b890;border-top-color:#e8e8c8;border-left-color:#e8e8c8"></div>
<svg class="a" style="left:69px;top:763px" width="22" height="21" viewBox="0 0 22 21"><rect x="3" y="3" width="16" height="15" fill="none" stroke="#000" stroke-width="1.6"/><path d="M3 10.5 h16 M11 6 v12 M3 7 l4 -4" stroke="#000" stroke-width="1.2" fill="none"/></svg>
<div class="a mono" style="left:97px;top:766px;font-size:13.5px;letter-spacing:0">X Y :</div>
<div class="a" style="left:143px;top:758px;width:173px;height:31px;background:#fffbd0;border:2px solid #c8c8a0;border-top-color:#b8b890;border-left-color:#b8b890"></div>
<div class="a" style="left:151px;top:762px;width:1px;height:15px;border-left:1px dotted #000"></div>
<div class="a" style="left:316px;top:757px;width:2px;height:33px;background:#777"></div>
<div class="a" style="left:318px;top:757px;width:28px;height:33px;background:#5fc3a8;border-right:2px solid #2f6a62"></div>
<div class="a" style="left:321px;top:760px;width:21px;height:26px;background:#fffbd0;border:2px solid #b8b890;border-top-color:#e8e8c8;border-left-color:#e8e8c8"></div>
<div class="a" style="left:324px;top:764px;width:15px;height:17px;border:1.5px solid #000;font:bold 13px/14px 'Liberation Sans';text-align:center">!</div>
<div class="a mono" style="left:351px;top:766px;font-size:12.5px;letter-spacing:-0.5px">&lt;M1&gt; - Select first area corner</div>
<div class="a" style="left:1360px;top:757px;width:20px;height:33px;background:#53cdae;border-left:1px solid #2f6a62"></div>
<div class="a" style="left:1363px;top:760px;width:17px;height:27px;background:#9fdada;border-top:2px solid #c8f8f4;border-left:2px solid #c8f8f4"></div>
<div class="a mono" style="left:1372px;top:766px;font-size:13px">I</div>
<div class="a" style="left:0;top:790px;width:1380px;height:2px;background:#222"></div>
<div class="a" style="left:0;top:792px;width:1380px;height:2px;background:#7a9a98"></div>
<div class="a" style="left:0;top:794px;width:1380px;height:5px;background:#c8fcfc"></div>
<div class="a" style="left:1277px;top:710px;width:103px;height:47px;background:#53cdae;border-top:2px solid #b8f4e4;border-left:2px solid #b8f4e4;border-bottom:2px solid #b8f4e4"></div>
<div class="a mono" style="left:1281px;top:719px;font-size:14.5px;line-height:16px;letter-spacing:0.2px;white-space:pre">X = -0.2177
Y = 2.20978</div>
<div class="a" style="left:728px;top:12px;width:660px;height:677px;border-radius:7px 7px 5px 5px;background:linear-gradient(#a8b8c0 0px,#b0bcc2 140px,#c4cacc 186px,#242628 189px,#202224 100%);border:1px solid #8a8a8a;border-left-color:#b0b0b0"></div>
<div class="a" style="left:734px;top:41px;width:646px;height:642px;background:#c8daf0"></div>
<div class="a" style="left:733px;top:41px;width:1px;height:642px;background:#e8f0f8"></div>
<div class="a" style="left:729px;top:13px;width:660px;height:28px;border-radius:6px 6px 0 0;background:linear-gradient(90deg,#b8d8e4 0%,#a8cad8 30%,#9ec4d6 45%,#a6cede 60%,#a0c8da 100%)"></div>
<div class="a" style="left:880px;top:30px;width:420px;height:10px;background:rgba(40,60,70,0.35);filter:blur(4px)"></div>
<div class="a" style="left:729px;top:13px;width:660px;height:1px;background:rgba(255,255,255,0.6)"></div>
<div class="a" style="left:734px;top:40px;width:646px;height:1px;background:#3a4650"></div>
<div class="a" style="left:770px;top:17px;width:107px;height:21px;border-radius:10px;border:1px solid rgba(90,110,120,0.5);background:linear-gradient(#c8dce6,#b0c8d4)"></div>
<svg class="a" style="left:787px;top:20px" width="15" height="15" viewBox="0 0 15 15"><rect x="0.5" y="0.5" width="14" height="14" fill="#4a4ab0" stroke="#303080"/><rect x="3" y="1" width="9" height="6" fill="#fff"/><rect x="4" y="9" width="7" height="5" fill="#222"/><rect x="5" y="10" width="2" height="3" fill="#fff"/></svg>
<svg class="a" style="left:808px;top:21px" width="40" height="14" viewBox="0 0 40 14"><path d="M3 3 v5 h5 M3.5 7.5 C6 2 12 2 12 7 C12 10 9 12 7 12" fill="none" stroke="#3a6ad0" stroke-width="2.4"/><path d="M14 6 l3 3 3-3z" fill="#3a5a90"/><path d="M37 3 v5 h-5 M36.5 7.5 C34 2 28 2 28 7 C28 10 31 12 33 12" fill="none" stroke="#b0c0c8" stroke-width="2.2"/></svg>
<svg class="a" style="left:882px;top:22px" width="8" height="10"><path d="M1 2 h6 M1 5 l3 3 3-3z" stroke="#203080" fill="#203080"/></svg>
<div class="a" style="left:880px;top:15px;width:380px;height:22px;border-radius:11px;background:rgba(235,245,250,0.35);filter:blur(6px)"></div>
<div class="a" style="left:942px;top:19px;white-space:nowrap;font-size:12.3px;color:#1a1a1a;white-space:nowrap">8S34301SA0-预审指示.xls</div>
<div class="a" style="left:1092px;top:19px;white-space:nowrap;font-size:12.3px;color:#1a1a1a;white-space:nowrap">[兼容模式]</div>
<div class="a" style="left:1154px;top:20px;white-space:nowrap;font-size:12.3px;color:#1a1a1a;white-space:nowrap">-</div>
<div class="a" style="left:1163px;top:20px;white-space:nowrap;font-size:12.3px;color:#1a1a1a;white-space:nowrap;letter-spacing:0.7px">Microsoft Excel</div>
<div class="a" style="left:1353px;top:12px;width:30px;height:20px;border:1px solid #556;border-top:none;border-radius:0 0 4px 4px;background:linear-gradient(#d8e8f0,#a8c4d4)"></div>
<div class="a" style="left:1363px;top:23px;width:12px;height:4px;background:#fff;border:1px solid #445"></div>
<div class="a" style="left:734px;top:41px;width:646px;height:28px;background:linear-gradient(#c8defa,#bed6f2)"></div>
<div class="a" style="left:734px;top:41px;width:1px;height:640px;background:#eef4fa"></div>
<div class="a" style="left:783px;top:44px;width:47px;height:26px;border:1px solid #9ab8dc;border-bottom:none;border-radius:3px 3px 0 0;background:linear-gradient(#f4f8fc,#e2ecf8)"></div>
<div class="a" style="left:793px;top:45px;font-size:13px;color:#15428b;white-space:nowrap">开始</div>
<div class="a" style="left:846px;top:45px;font-size:13px;color:#15428b;white-space:nowrap">插入</div>
<div class="a" style="left:899px;top:45px;font-size:13px;color:#15428b;white-space:nowrap">页面布局</div>
<div class="a" style="left:976px;top:45px;font-size:13px;color:#15428b;white-space:nowrap">公式</div>
<div class="a" style="left:1029px;top:45px;font-size:13px;color:#15428b;white-space:nowrap">数据</div>
<div class="a" style="left:1082px;top:45px;font-size:13px;color:#15428b;white-space:nowrap">审阅</div>
<div class="a" style="left:1135px;top:45px;font-size:13px;color:#15428b;white-space:nowrap">视图</div>
<div class="a" style="left:1372px;top:46px;width:18px;height:18px;border-radius:50%;background:#fff;border:2px solid #5a8ad0"></div><div class="a" style="left:1376px;top:50px;width:12px;height:12px;border-radius:50%;background:radial-gradient(circle at 40% 35%,#6aa8ff,#1a4ab0)"></div>
<div class="a" style="left:738px;top:20px;width:36px;height:36px;border-radius:50%;background:radial-gradient(circle at 50% 40%,#ffffff 0%,#f0f2f4 50%,#c8d0d6 100%);border:1px solid #7a8a96;box-shadow:0 1px 2px rgba(0,0,0,0.35)"></div>
<svg class="a" style="left:738px;top:20px" width="36" height="36" viewBox="0 0 36 36"><path d="M16 17 V10 Q16 8.5 14.5 8.5 H10 Q8.5 8.5 8.5 10 V15.5 Q8.5 17 10 17 H13" fill="none" stroke="#d8400a" stroke-width="3"/><path d="M21 13.5 H25 V17.5" fill="none" stroke="#2a80d0" stroke-width="2"/><circle cx="22" cy="17" r="1" fill="#2a80d0"/><circle cx="18.5" cy="17" r="1.1" fill="#e06020"/><path d="M18 21 V27 Q18 28.5 16.5 28.5 H12 Q10.5 28.5 10.5 27 V21.5" fill="none" stroke="#f0a018" stroke-width="3"/><circle cx="14.5" cy="21" r="1" fill="#f0b030"/><path d="M21.5 27.5 H27 Q28.5 27.5 28.5 26 V21.5 H25" fill="none" stroke="#40a028" stroke-width="3"/><circle cx="22" cy="21.5" r="1" fill="#40a028"/></svg>
<div class="a" style="left:734px;top:68px;width:646px;height:106px;background:linear-gradient(#d6e4f6,#c6d8f0 70%,#c8daf2)"></div>
<div class="a" style="left:734px;top:68px;width:646px;height:1px;background:#9ab8dc"></div>
<div class="a" style="left:738px;top:72px;width:72px;height:99px;border:1px solid #aec4e0;border-radius:3px;background:linear-gradient(#eaf1fa 0%,#dce8f6 20%,#cddcf0 80%)"></div>
<div class="a" style="left:739px;top:152px;width:70px;height:18px;background:#c2d6ee;border-radius:0 0 3px 3px"></div>
<div class="a" style="left:729px;top:153px;width:72px;text-align:center;font-size:12px;color:#3e6aaa">剪贴板</div>
<svg class="a" style="left:797px;top:155px" width="9" height="9"><path d="M0.5 0.5 h7 v7 h-7z" fill="#f4f8fc" stroke="#7a90b0"/><path d="M3 3 l3 3 M6 3.5 v2.5 h-2.5" stroke="#3a5a80" fill="none"/></svg>
<div class="a" style="left:813px;top:72px;width:150px;height:99px;border:1px solid #aec4e0;border-radius:3px;background:linear-gradient(#eaf1fa 0%,#dce8f6 20%,#cddcf0 80%)"></div>
<div class="a" style="left:814px;top:152px;width:148px;height:18px;background:#c2d6ee;border-radius:0 0 3px 3px"></div>
<div class="a" style="left:804px;top:153px;width:150px;text-align:center;font-size:12px;color:#3e6aaa">字体</div>
<svg class="a" style="left:950px;top:155px" width="9" height="9"><path d="M0.5 0.5 h7 v7 h-7z" fill="#f4f8fc" stroke="#7a90b0"/><path d="M3 3 l3 3 M6 3.5 v2.5 h-2.5" stroke="#3a5a80" fill="none"/></svg>
<div class="a" style="left:967px;top:72px;width:112px;height:99px;border:1px solid #aec4e0;border-radius:3px;background:linear-gradient(#eaf1fa 0%,#dce8f6 20%,#cddcf0 80%)"></div>
<div class="a" style="left:968px;top:152px;width:110px;height:18px;background:#c2d6ee;border-radius:0 0 3px 3px"></div>
<div class="a" style="left:958px;top:153px;width:112px;text-align:center;font-size:12px;color:#3e6aaa">对齐方式</div>
<svg class="a" style="left:1066px;top:155px" width="9" height="9"><path d="M0.5 0.5 h7 v7 h-7z" fill="#f4f8fc" stroke="#7a90b0"/><path d="M3 3 l3 3 M6 3.5 v2.5 h-2.5" stroke="#3a5a80" fill="none"/></svg>
<div class="a" style="left:1082px;top:72px;width:87px;height:99px;border:1px solid #aec4e0;border-radius:3px;background:linear-gradient(#eaf1fa 0%,#dce8f6 20%,#cddcf0 80%)"></div>
<div class="a" style="left:1083px;top:152px;width:85px;height:18px;background:#c2d6ee;border-radius:0 0 3px 3px"></div>
<div class="a" style="left:1073px;top:153px;width:87px;text-align:center;font-size:12px;color:#3e6aaa">数字</div>
<svg class="a" style="left:1156px;top:155px" width="9" height="9"><path d="M0.5 0.5 h7 v7 h-7z" fill="#f4f8fc" stroke="#7a90b0"/><path d="M3 3 l3 3 M6 3.5 v2.5 h-2.5" stroke="#3a5a80" fill="none"/></svg>
<div class="a" style="left:1173px;top:72px;width:42px;height:99px;border:1px solid #aec4e0;border-radius:3px;background:linear-gradient(#eaf1fa 0%,#dce8f6 20%,#cddcf0 80%)"></div>
<div class="a" style="left:1218px;top:72px;width:66px;height:99px;border:1px solid #aec4e0;border-radius:3px;background:linear-gradient(#eaf1fa 0%,#dce8f6 20%,#cddcf0 80%)"></div>
<div class="a" style="left:1219px;top:152px;width:64px;height:18px;background:#c2d6ee;border-radius:0 0 3px 3px"></div>
<div class="a" style="left:1218px;top:153px;width:66px;text-align:center;font-size:12px;color:#3e6aaa">单元格</div>
<div class="a" style="left:1288px;top:72px;width:124px;height:99px;border:1px solid #aec4e0;border-radius:3px;background:linear-gradient(#eaf1fa 0%,#dce8f6 20%,#cddcf0 80%)"></div>
<div class="a" style="left:1289px;top:152px;width:122px;height:18px;background:#c2d6ee;border-radius:0 0 3px 3px"></div>
<div class="a" style="left:1288px;top:153px;width:124px;text-align:center;font-size:12px;color:#3e6aaa">编辑</div>
<svg class="a" style="left:749px;top:74px" width="30" height="34" viewBox="0 0 30 34"><rect x="1" y="4" width="22" height="26" rx="2" fill="#f0c060" stroke="#c89838"/><rect x="7" y="1" width="10" height="6" rx="2" fill="#e8e8e8" stroke="#888"/><path d="M11 12 h13 l5 5 v16 h-18z" fill="#fff" stroke="#8a98a8"/><path d="M14 18 h11 M14 21 h11 M14 24 h11 M14 27 h11" stroke="#a8b4c0"/></svg>
<div class="a" style="left:749px;top:111px;white-space:nowrap;font-size:13px;color:#15428b">粘贴</div>
<svg class="a" style="left:760px;top:135px" width="8" height="5"><path d="M0 0 h7 l-3.5 4z" fill="#4a6a9a"/></svg>
<svg class="a" style="left:786px;top:76px" width="16" height="16" viewBox="0 0 16 16"><path d="M5 1 l5 9 M11 1 l-5 9" stroke="#556" stroke-width="1.4"/><circle cx="5" cy="12" r="3" fill="none" stroke="#2a50b0" stroke-width="2"/><circle cx="11" cy="12" r="3" fill="none" stroke="#2a50b0" stroke-width="2"/></svg>
<svg class="a" style="left:786px;top:97px" width="18" height="16" viewBox="0 0 18 16"><path d="M1.5 1.5 h6 l2 2 v7 h-8z" fill="#fff" stroke="#4a6aa8"/><path d="M3 4 h4 M3 6 h4 M3 8 h4" stroke="#4a6aa8" stroke-width="0.8"/><path d="M7.5 5.5 h6 l3 3 v6 h-9z" fill="#fff" stroke="#4a6aa8"/><path d="M9 9 h6 M9 11 h6 M9 13 h6" stroke="#4a6aa8" stroke-width="0.9"/></svg>
<svg class="a" style="left:787px;top:119px" width="17" height="17" viewBox="0 0 17 17"><path d="M10 2 l5 5 -2 2 -5 -5z" fill="#6a6aa0"/><path d="M8 5 l4 4 -6 6 c-2 1 -5 -2 -4 -4z" fill="#e8d060" stroke="#a89030"/></svg>
<div class="a" style="left:817px;top:75px;width:95px;height:25px;background:#eef4fb;border:1px solid #c0d0e4;border-radius:2px"></div>
<div class="a" style="left:912px;top:75px;width:47px;height:25px;background:#eef4fb;border:1px solid #c0d0e4;border-radius:2px"></div>
<div class="a" style="left:820px;top:78px;white-space:nowrap;font-size:13px;color:#000">宋体</div>
<div class="a" style="left:916px;top:79px;white-space:nowrap;font-size:13px;color:#000">12</div>
<svg class="a" style="left:904px;top:86px" width="6" height="4"><path d="M0 0 h5 l-2.5 3z" fill="#4a5a70"/></svg>
<svg class="a" style="left:951px;top:86px" width="6" height="4"><path d="M0 0 h5 l-2.5 3z" fill="#4a5a70"/></svg>
<div class="a" style="left:817px;top:103px;width:80px;height:21px;border:1px solid #a8bcd8;border-radius:2px;background:linear-gradient(#f4f8fc,#dce8f6 50%,#cfdef2 51%,#e0eaf8)"></div>
<div class="a" style="left:817px;top:103px;width:22px;height:21px;border:1px solid #c2a25a;border-radius:2px;background:linear-gradient(#fde8a8,#fbd372 50%,#f9b93c 51%,#fcd77a)"></div>
<div class="a" style="left:823px;top:105px;white-space:nowrap;font:bold 14px Liberation Serif;color:#000">B</div>
<div class="a" style="left:847px;top:104px;white-space:nowrap;font:italic bold 15px Liberation Serif;color:#222">I</div>
<div class="a" style="left:869px;top:105px;white-space:nowrap;font:bold 14px Liberation Serif;color:#000;text-decoration:underline">U</div>
<svg class="a" style="left:887px;top:112px" width="6" height="4"><path d="M0 0 h5 l-2.5 3z" fill="#4a5a70"/></svg>
<div class="a" style="left:900px;top:103px;width:45px;height:21px;border:1px solid #a8bcd8;border-radius:2px;background:linear-gradient(#f4f8fc,#dce8f6 50%,#cfdef2 51%,#e0eaf8)"></div>
<div class="a" style="left:903px;top:104px;white-space:nowrap;font:bold 16px Liberation Serif;color:#111">A</div>
<div class="a" style="left:926px;top:108px;white-space:nowrap;font:bold 12px Liberation Serif;color:#111">A</div>
<div class="a" style="left:817px;top:127px;width:34px;height:21px;border:1px solid #a8bcd8;border-radius:2px;background:linear-gradient(#f4f8fc,#dce8f6 50%,#cfdef2 51%,#e0eaf8)"></div>
<svg class="a" style="left:820px;top:130px" width="16" height="15" viewBox="0 0 16 15"><path d="M1 1 h13 v12 h-13z M7.5 1 v12 M1 7 h13" fill="none" stroke="#666" stroke-dasharray="1 1"/><path d="M1 14 h13" stroke="#000" stroke-width="1.5"/></svg>
<div class="a" style="left:855px;top:127px;width:66px;height:21px;border:1px solid #a8bcd8;border-radius:2px;background:linear-gradient(#f4f8fc,#dce8f6 50%,#cfdef2 51%,#e0eaf8)"></div>
<svg class="a" style="left:859px;top:129px" width="18" height="17" viewBox="0 0 18 17"><path d="M4 4 l5 -3 5 6 -5 4z" fill="#fff" stroke="#334"/><path d="M14 7 q3 3 1 5" stroke="#3070d0" fill="none" stroke-width="1.5"/><rect x="1" y="13" width="15" height="3" fill="#ffff00"/></svg>
<div class="a" style="left:893px;top:128px;white-space:nowrap;font:15px Liberation Serif;color:#1a3a90">A</div>
<div class="a" style="left:892px;top:143px;width:16px;height:3px;background:#e00000"></div>
<div class="a" style="left:924px;top:127px;width:35px;height:21px;border:1px solid #a8bcd8;border-radius:2px;background:linear-gradient(#f4f8fc,#dce8f6 50%,#cfdef2 51%,#e0eaf8)"></div>
<div class="a" style="left:928px;top:126px;white-space:nowrap;font-size:8px;color:#223">wén</div>
<svg class="a" style="left:843px;top:137px" width="6" height="4"><path d="M0 0 h5 l-2.5 3z" fill="#4a5a70"/></svg>
<svg class="a" style="left:880px;top:137px" width="6" height="4"><path d="M0 0 h5 l-2.5 3z" fill="#4a5a70"/></svg>
<svg class="a" style="left:914px;top:137px" width="6" height="4"><path d="M0 0 h5 l-2.5 3z" fill="#4a5a70"/></svg>
<svg class="a" style="left:951px;top:137px" width="6" height="4"><path d="M0 0 h5 l-2.5 3z" fill="#4a5a70"/></svg>
<svg class="a" style="left:915px;top:107px" width="30" height="5"><path d="M0 3 l2.5 -3 2.5 3z M22 0 h5 l-2.5 3z" fill="#3a5a90"/></svg>
<div class="a" style="left:930px;top:132px;white-space:nowrap;font-size:13px;color:#2a4aa0">文</div>
<div class="a" style="left:972px;top:76px;width:67px;height:20px;border:1px solid #a8bcd8;border-radius:2px;background:linear-gradient(#f4f8fc,#dce8f6 50%,#cfdef2 51%,#e0eaf8)"></div>
<div class="a" style="left:994px;top:76px;width:22px;height:20px;border:1px solid #c2a25a;border-radius:2px;background:linear-gradient(#fde8a8,#fbd372 50%,#f9b93c 51%,#fcd77a)"></div>
<div class="a" style="left:972px;top:101px;width:67px;height:21px;border:1px solid #a8bcd8;border-radius:2px;background:linear-gradient(#f4f8fc,#dce8f6 50%,#cfdef2 51%,#e0eaf8)"></div>
<div class="a" style="left:994px;top:101px;width:22px;height:21px;border:1px solid #c2a25a;border-radius:2px;background:linear-gradient(#fde8a8,#fbd372 50%,#f9b93c 51%,#fcd77a)"></div>
<svg class="a" style="left:975px;top:80px" width="16" height="9"><path d="M1 1.5 h13 M2 4.5 h11 M1 7.5 h13" stroke="#000" stroke-width="1.3"/></svg>
<svg class="a" style="left:975px;top:104px" width="16" height="15"><path d="M1 1.5 h14 M1 4.5 h9 M1 7.5 h14 M1 10.5 h9 M1 13.5 h14" stroke="#000" stroke-width="1.3"/></svg>
<svg class="a" style="left:997px;top:84px" width="16" height="9"><path d="M1 1.5 h13 M2 4.5 h11 M1 7.5 h13" stroke="#000" stroke-width="1.3"/></svg>
<svg class="a" style="left:997px;top:104px" width="16" height="15"><path d="M1 1.5 h14 M3 4.5 h9 M1 7.5 h14 M3 10.5 h9 M1 13.5 h14" stroke="#000" stroke-width="1.3"/></svg>
<svg class="a" style="left:1019px;top:88px" width="16" height="9"><path d="M1 1.5 h13 M2 4.5 h11 M1 7.5 h13" stroke="#000" stroke-width="1.3"/></svg>
<svg class="a" style="left:1019px;top:104px" width="16" height="15"><path d="M1 1.5 h14 M5 4.5 h9 M1 7.5 h14 M5 10.5 h9 M1 13.5 h14" stroke="#000" stroke-width="1.3"/></svg>
<div class="a" style="left:1043px;top:76px;width:22px;height:20px;border:1px solid #c2a25a;border-radius:2px;background:linear-gradient(#fde8a8,#fbd372 50%,#f9b93c 51%,#fcd77a)"></div>
<svg class="a" style="left:1046px;top:79px" width="16" height="14"><rect x="1.5" y="1.5" width="12" height="11" fill="#fff" stroke="#333"/><path d="M3 4.5 h8 M3 7.5 h6 M3 10.5 h8" stroke="#000"/><path d="M13 5 v3 h-2" stroke="#000" fill="none"/></svg>
<div class="a" style="left:1043px;top:101px;width:33px;height:21px;border:1px solid #c2a25a;border-radius:2px;background:linear-gradient(#fde8a8,#fbd372 50%,#f9b93c 51%,#fcd77a)"></div>
<svg class="a" style="left:1045px;top:103px" width="18" height="16"><rect x="1" y="1" width="16" height="14" fill="#fff" stroke="#333"/><path d="M1 5 h16 M1 11 h16" stroke="#333"/><text x="6" y="10.5" font-size="7" font-family="Liberation Sans" fill="#000">a</text><path d="M2 8 h3 M13 8 h3" stroke="#333"/></svg>
<svg class="a" style="left:1066px;top:110px" width="6" height="4"><path d="M0 0 h5 l-2.5 3z" fill="#333"/></svg>
<div class="a" style="left:972px;top:126px;width:44px;height:21px;border:1px solid #a8bcd8;border-radius:2px;background:linear-gradient(#f4f8fc,#dce8f6 50%,#cfdef2 51%,#e0eaf8)"></div>
<svg class="a" style="left:975px;top:129px" width="40" height="15"><path d="M7 1.5 h8 M7 4.5 h8 M7 7.5 h8 M7 10.5 h8 M7 13.5 h8 M26 1.5 h8 M26 4.5 h8 M26 7.5 h8 M26 10.5 h8 M26 13.5 h8" stroke="#000" stroke-width="1.2"/><path d="M1 7.5 l4 -3 v6z M19 4.5 l4 3 -4 3z" fill="#3070d0"/></svg>
<div class="a" style="left:1020px;top:126px;width:31px;height:21px;border:1px solid #a8bcd8;border-radius:2px;background:linear-gradient(#f4f8fc,#dce8f6 50%,#cfdef2 51%,#e0eaf8)"></div>
<svg class="a" style="left:1024px;top:128px" width="24" height="17"><text x="1" y="12" font-size="10" font-family="Liberation Sans" font-weight="bold" fill="#111" transform="rotate(-35 6 9)">ab</text><path d="M6 15 l9 -9 l-3 0 M15 6 l0 3" stroke="#222" stroke-width="1.2" fill="none"/><path d="M18 8 h5 l-2.5 3z" fill="#4a5a70"/></svg>
<div class="a" style="left:1086px;top:75px;width:80px;height:25px;background:#eef4fb;border:1px solid #c0d0e4;border-radius:2px"></div>
<div class="a" style="left:1089px;top:77px;white-space:nowrap;font-size:13px;color:#000">常规</div>
<svg class="a" style="left:1155px;top:86px" width="6" height="4"><path d="M0 0 h5 l-2.5 3z" fill="#4a5a70"/></svg>
<div class="a" style="left:1086px;top:103px;width:80px;height:21px;border:1px solid #a8bcd8;border-radius:2px;background:linear-gradient(#f4f8fc,#dce8f6 50%,#cfdef2 51%,#e0eaf8)"></div>
<svg class="a" style="left:1089px;top:105px" width="28" height="17"><rect x="1" y="1" width="14" height="8" rx="2" fill="#6a90d0" stroke="#2a4a90"/><ellipse cx="8" cy="5" rx="4" ry="2.5" fill="none" stroke="#fff" stroke-width="0.8"/><ellipse cx="11" cy="11" rx="3.5" ry="1.5" fill="#f0c030" stroke="#a07010" stroke-width="0.8"/><ellipse cx="11" cy="14" rx="3.5" ry="1.5" fill="#f0c030" stroke="#a07010" stroke-width="0.8"/><path d="M2 12 h4" stroke="#d09020" stroke-width="1.5"/><path d="M21 8 h5 l-2.5 3z" fill="#4a5a70"/></svg>
<div class="a" style="left:1119px;top:104px;width:1px;height:19px;background:#c8d8ea"></div>
<div class="a" style="left:1143px;top:104px;width:1px;height:19px;background:#c8d8ea"></div>
<div class="a" style="left:1124px;top:104px;white-space:nowrap;font:bold 14px Liberation Sans;color:#222">%</div>
<div class="a" style="left:1151px;top:101px;white-space:nowrap;font:bold 16px Liberation Serif;color:#111">,</div>
<div class="a" style="left:1086px;top:127px;width:45px;height:21px;border:1px solid #a8bcd8;border-radius:2px;background:linear-gradient(#f4f8fc,#dce8f6 50%,#cfdef2 51%,#e0eaf8)"></div>
<div class="a" style="left:1108px;top:128px;width:1px;height:19px;background:#c8d8ea"></div>
<svg class="a" style="left:1089px;top:128px" width="40" height="19"><text x="5" y="9" font-size="9" font-family="Liberation Sans" font-weight="bold" fill="#111">.0</text><text x="3" y="17" font-size="9" font-family="Liberation Sans" font-weight="bold" fill="#111">.00</text><path d="M1 5 h5 M1 5 l2 -2 M1 5 l2 2" stroke="#3070d0" stroke-width="1.2" fill="none"/><text x="24" y="9" font-size="9" font-family="Liberation Sans" font-weight="bold" fill="#111">.00</text><text x="27" y="17" font-size="9" font-family="Liberation Sans" font-weight="bold" fill="#111">.0</text><path d="M20 13 h5 M25 13 l-2 -2 M25 13 l-2 2" stroke="#3070d0" stroke-width="1.2" fill="none"/></svg>
<div class="a" style="left:1177px;top:76px;width:34px;height:30px;border:1px solid #b8c8dc;border-radius:3px;background:linear-gradient(#f2f6fb,#dce6f2)"></div>
<svg class="a" style="left:1180px;top:78px" width="28" height="26"><text x="3" y="20" font-family="Liberation Serif" font-style="italic" font-size="22" fill="#2a4a9a">A</text><path d="M14 21 l8 -8 2 2 -8 8z" fill="#e8c040" stroke="#806010" stroke-width="0.6"/><path d="M8 19 q4 4 8 1" stroke="#4a6ac0" fill="none"/></svg>
<div class="a" style="left:1180px;top:110px;white-space:nowrap;font-size:13px;color:#15428b">样式</div>
<svg class="a" style="left:1189px;top:135px" width="8" height="5"><path d="M0 0 h7 l-3.5 4z" fill="#4a6a9a"/></svg>
<svg class="a" style="left:1223px;top:79px" width="18" height="17"><rect x="1" y="1" width="5" height="4" fill="#fff" stroke="#556"/><rect x="1" y="6" width="5" height="4" fill="#fff" stroke="#556"/><rect x="1" y="11" width="5" height="4" fill="#fff" stroke="#556"/><path d="M8 7.5 h4" stroke="#223" stroke-width="1.5"/><path d="M8 7.5 l2 -2 v4z" fill="#223"/><rect x="12" y="5.5" width="5" height="4" fill="#fff" stroke="#556"/></svg>
<div class="a" style="left:1244px;top:75px;white-space:nowrap;font-size:13px;color:#15428b">插入</div>
<svg class="a" style="left:1271px;top:85px" width="6" height="4"><path d="M0 0 h5 l-2.5 3z" fill="#4a6a9a"/></svg>
<svg class="a" style="left:1223px;top:101px" width="18" height="17"><rect x="1" y="1" width="5" height="4" fill="#fff" stroke="#556"/><rect x="1" y="6" width="5" height="4" fill="#fff" stroke="#556"/><rect x="1" y="11" width="5" height="4" fill="#fff" stroke="#556"/><path d="M7 5 h3 M10 5 v3" stroke="#556"/><path d="M10 3 l7 7 M17 3 l-7 7" stroke="#e03020" stroke-width="2"/></svg>
<div class="a" style="left:1244px;top:97px;white-space:nowrap;font-size:13px;color:#15428b">删除</div>
<svg class="a" style="left:1271px;top:107px" width="6" height="4"><path d="M0 0 h5 l-2.5 3z" fill="#4a6a9a"/></svg>
<svg class="a" style="left:1223px;top:123px" width="18" height="17"><rect x="1" y="1" width="16" height="14" fill="#fff" stroke="#556"/><path d="M1 5.5 h16 M1 10 h16 M6 1 v14 M12 1 v14" stroke="#667"/><rect x="6" y="5.5" width="6" height="4.5" fill="#6a8ad8"/><path d="M3 0 v2 M9 0 v2 M15 0 v2" stroke="#223" stroke-width="1.5"/></svg>
<div class="a" style="left:1244px;top:119px;white-space:nowrap;font-size:13px;color:#15428b">格式</div>
<svg class="a" style="left:1271px;top:129px" width="6" height="4"><path d="M0 0 h5 l-2.5 3z" fill="#4a6a9a"/></svg>
<div class="a" style="left:1296px;top:75px;white-space:nowrap;font:bold 18px Liberation Sans;color:#111">Σ</div>
<svg class="a" style="left:1313px;top:83px" width="6" height="4"><path d="M0 0 h5 l-2.5 3z" fill="#4a6a9a"/></svg>
<svg class="a" style="left:1295px;top:97px" width="16" height="17"><rect x="1" y="1" width="13" height="15" fill="#dbe8fa" stroke="#4a70b0"/><rect x="2" y="2" width="11" height="3" fill="#6a9ae0"/><path d="M7.5 6 v6" stroke="#1a50c0" stroke-width="2.4"/><path d="M4 10 l3.5 4 3.5 -4z" fill="#1a50c0"/></svg>
<svg class="a" style="left:1313px;top:105px" width="6" height="4"><path d="M0 0 h5 l-2.5 3z" fill="#4a6a9a"/></svg>
<svg class="a" style="left:1294px;top:119px" width="18" height="16"><path d="M3 10 l7 -7 a2 2 0 0 1 3 0 l2 2 a2 2 0 0 1 0 3 l-6 6 h-3 z" fill="#f4f4f4" stroke="#667"/><path d="M3 15 h10" stroke="#111" stroke-width="1.2"/></svg>
<svg class="a" style="left:1313px;top:127px" width="6" height="4"><path d="M0 0 h5 l-2.5 3z" fill="#4a6a9a"/></svg>
<svg class="a" style="left:1328px;top:74px" width="36" height="34"><text x="1" y="15" font-family="Liberation Serif" font-weight="bold" font-size="17" fill="#3a5ab0">A</text><text x="1" y="32" font-family="Liberation Serif" font-weight="bold" font-size="17" fill="#a04030">Z</text><path d="M13 8 h22 l-8 10 v12 h-5 v-12z" fill="#b8b8b8" stroke="#8a8a8a"/><path d="M15 9 h18 l-6 7 h-6z" fill="#e0e0e0"/></svg>
<div class="a" style="left:1326px;top:110px;white-space:nowrap;font-size:13px;color:#15428b">排序和</div>
<div class="a" style="left:1329px;top:127px;white-space:nowrap;font-size:13px;color:#15428b">筛选</div>
<svg class="a" style="left:1358px;top:135px" width="6" height="4"><path d="M0 0 h5 l-2.5 3z" fill="#4a6a9a"/></svg>
<div class="a" style="left:1368px;top:110px;white-space:nowrap;font-size:13px;color:#15428b">查</div>
<div class="a" style="left:1368px;top:127px;white-space:nowrap;font-size:13px;color:#15428b">选</div>
<svg class="a" style="left:1368px;top:78px" width="14" height="28"><rect x="3" y="2" width="6" height="8" fill="#c8d4e0" stroke="#667"/><rect x="1" y="10" width="12" height="16" rx="2" fill="#a8b8cc" stroke="#556"/></svg>
<div class="a" style="left:734px;top:174px;width:646px;height:68px;background:#c4d8f0"></div>
<div class="a" style="left:737px;top:181px;width:643px;height:33px;background:linear-gradient(#f6f9fd,#e4eef9);border:1px solid #b0c8e4;border-radius:2px"></div>
<svg class="a" style="left:740px;top:189px" width="15" height="17" viewBox="0 0 15 17"><path d="M7.5 1 C10 3 13 3 14 3 C14 10 12 14 7.5 16 C3 14 1 10 1 3 C2 3 5 3 7.5 1z" fill="#f08a10" stroke="#a05a10"/><path d="M7.5 2 C9.5 3.5 12 4 13 4 C13 6 12 7 7.5 7 z" fill="#ffd070"/></svg>
<div class="a" style="left:766px;top:190px;white-space:nowrap;font-size:12px;font-weight:bold;color:#15428b">安全警告</div>
<div class="a" style="left:826px;top:190px;white-space:nowrap;font-size:12px;color:#15428b;letter-spacing:0.5px">部分活动内容已被禁用。</div>
<div class="a" style="left:968px;top:186px;width:69px;height:21px;background:linear-gradient(#fdfeff,#eef3fa);border:1px solid #a8bcd8;border-radius:2px"></div>
<div class="a" style="left:986px;top:190px;white-space:nowrap;font-size:12px;color:#15428b">选项...</div>
<div class="a" style="left:734px;top:216px;width:646px;height:26px;background:#c4d8f0"></div>
<div class="a" style="left:736px;top:219px;width:644px;height:21px;background:#fff;border-top:1px solid #9db4d4;border-bottom:1px solid #9db4d4"></div>
<div class="a" style="left:797px;top:222px;white-space:nowrap;font:16px Liberation Serif;color:#000;letter-spacing:0.5px">B2</div>
<svg class="a" style="left:880px;top:227px" width="8" height="5"><path d="M0 0 h7 l-3.5 4z" fill="#000"/></svg>
<div class="a" style="left:895px;top:220px;width:70px;height:19px;background:linear-gradient(#e8eef6,#c8d4e4);border-radius:10px 0 0 10px;border-right:1px solid #b0c0d4"></div>
<div class="a" style="left:899px;top:223px;width:12px;height:13px;border-radius:50%;background:radial-gradient(circle at 40% 40%,#fff,#aab)"></div>
<div class="a" style="left:951px;top:220px;white-space:nowrap;font:italic bold 14px Liberation Serif;color:#445"><i>f</i><span style="font-size:9px">x</span></div>
<div class="a" style="left:982px;top:222px;white-space:nowrap;font:16px Liberation Serif;color:#000;letter-spacing:-0.5px">8S34301SA0</div>
<div class="a" style="left:736px;top:243px;width:644px;height:18px;background:linear-gradient(#f6f9fc,#e3ebf5 60%,#d8e2ee);border-bottom:1px solid #9eb6ce"></div>
<div class="a" style="left:736px;top:243px;width:32px;height:18px;background:linear-gradient(#b8d0ee,#a4c0e6);border-right:1px solid #9eb6ce;border-bottom:1px solid #9eb6ce"></div>
<svg class="a" style="left:752px;top:248px" width="12" height="11"><path d="M11 0 v10 h-10z" fill="#fff" opacity="0.9"/></svg>
<div class="a" style="left:768px;top:243px;width:109px;height:18px;border-right:1px solid #9eb6ce;border-bottom:1px solid #9eb6ce;text-align:center;font:16px/20px 'Liberation Serif';color:#27415f">A</div>
<div class="a" style="left:877px;top:243px;width:38px;height:18px;background:linear-gradient(#fbe0a0,#f8c870 60%,#f5b850);border-right:1px solid #9eb6ce;border-bottom:1px solid #f29436;text-align:center;font:16px/20px 'Liberation Serif';color:#27415f">B</div>
<div class="a" style="left:915px;top:243px;width:111px;height:18px;background:linear-gradient(#fbe0a0,#f8c870 60%,#f5b850);border-right:1px solid #9eb6ce;border-bottom:1px solid #f29436;text-align:center;font:16px/20px 'Liberation Serif';color:#27415f">C</div>
<div class="a" style="left:1026px;top:243px;width:61px;height:18px;background:linear-gradient(#fbe0a0,#f8c870 60%,#f5b850);border-right:1px solid #9eb6ce;border-bottom:1px solid #f29436;text-align:center;font:16px/20px 'Liberation Serif';color:#27415f">D</div>
<div class="a" style="left:1087px;top:243px;width:81px;height:18px;border-right:1px solid #9eb6ce;border-bottom:1px solid #9eb6ce;text-align:center;font:16px/20px 'Liberation Serif';color:#27415f">E</div>
<div class="a" style="left:1168px;top:243px;width:72px;height:18px;border-right:1px solid #9eb6ce;border-bottom:1px solid #9eb6ce;text-align:center;font:16px/20px 'Liberation Serif';color:#27415f">F</div>
<div class="a" style="left:1240px;top:243px;width:49px;height:18px;border-right:1px solid #9eb6ce;border-bottom:1px solid #9eb6ce;text-align:center;font:16px/20px 'Liberation Serif';color:#27415f">G</div>
<div class="a" style="left:1289px;top:243px;width:89px;height:18px;border-right:1px solid #9eb6ce;border-bottom:1px solid #9eb6ce;text-align:center;font:16px/20px 'Liberation Serif';color:#27415f">H</div>
<div class="a" style="left:1378px;top:243px;width:22px;height:18px;border-right:1px solid #9eb6ce;border-bottom:1px solid #9eb6ce;text-align:center;font:16px/20px 'Liberation Serif';color:#27415f"></div>
<div class="a" style="left:768px;top:261px;width:612px;height:384px;background:#fff"></div>
<div class="a" style="left:737px;top:261px;width:31px;height:30px;background:#e4ecf7;border-bottom:1px solid #9eb6ce;border-right:1px solid #9eb6ce;overflow:hidden"><div class="a" style="left:0;width:31px;top:15.5px;text-align:center;font:16px/16px 'Liberation Serif';color:#27415f">1</div></div>
<div class="a" style="left:737px;top:291px;width:31px;height:30px;background:linear-gradient(90deg,#fbd890,#f8c068);border-bottom:1px solid #f29436;border-right:1px solid #f29436;overflow:hidden"><div class="a" style="left:0;width:31px;top:15.5px;text-align:center;font:16px/16px 'Liberation Serif';color:#27415f">2</div></div>
<div class="a" style="left:737px;top:321px;width:31px;height:30px;background:#e4ecf7;border-bottom:1px solid #9eb6ce;border-right:1px solid #9eb6ce;overflow:hidden"><div class="a" style="left:0;width:31px;top:15.5px;text-align:center;font:16px/16px 'Liberation Serif';color:#27415f">3</div></div>
<div class="a" style="left:737px;top:351px;width:31px;height:30px;background:#e4ecf7;border-bottom:1px solid #9eb6ce;border-right:1px solid #9eb6ce;overflow:hidden"><div class="a" style="left:0;width:31px;top:15.5px;text-align:center;font:16px/16px 'Liberation Serif';color:#27415f">4</div></div>
<div class="a" style="left:737px;top:381px;width:31px;height:30px;background:#e4ecf7;border-bottom:1px solid #9eb6ce;border-right:1px solid #9eb6ce;overflow:hidden"><div class="a" style="left:0;width:31px;top:15.5px;text-align:center;font:16px/16px 'Liberation Serif';color:#27415f">5</div></div>
<div class="a" style="left:737px;top:411px;width:31px;height:30px;background:#e4ecf7;border-bottom:1px solid #9eb6ce;border-right:1px solid #9eb6ce;overflow:hidden"><div class="a" style="left:0;width:31px;top:15.5px;text-align:center;font:16px/16px 'Liberation Serif';color:#27415f">6</div></div>
<div class="a" style="left:737px;top:441px;width:31px;height:60px;background:#e4ecf7;border-bottom:1px solid #9eb6ce;border-right:1px solid #9eb6ce;overflow:hidden"><div class="a" style="left:0;width:31px;top:45.5px;text-align:center;font:16px/16px 'Liberation Serif';color:#27415f">7</div></div>
<div class="a" style="left:737px;top:501px;width:31px;height:29px;background:#e4ecf7;border-bottom:1px solid #9eb6ce;border-right:1px solid #9eb6ce;overflow:hidden"><div class="a" style="left:0;width:31px;top:14.5px;text-align:center;font:16px/16px 'Liberation Serif';color:#27415f">8</div></div>
<div class="a" style="left:737px;top:530px;width:31px;height:30px;background:#e4ecf7;border-bottom:1px solid #9eb6ce;border-right:1px solid #9eb6ce;overflow:hidden"><div class="a" style="left:0;width:31px;top:15.5px;text-align:center;font:16px/16px 'Liberation Serif';color:#27415f">9</div></div>
<div class="a" style="left:737px;top:560px;width:31px;height:30px;background:#e4ecf7;border-bottom:1px solid #9eb6ce;border-right:1px solid #9eb6ce;overflow:hidden"><div class="a" style="left:0;width:31px;top:15.5px;text-align:center;font:16px/16px 'Liberation Serif';color:#27415f">10</div></div>
<div class="a" style="left:737px;top:590px;width:31px;height:30px;background:#e4ecf7;border-bottom:1px solid #9eb6ce;border-right:1px solid #9eb6ce;overflow:hidden"><div class="a" style="left:0;width:31px;top:15.5px;text-align:center;font:16px/16px 'Liberation Serif';color:#27415f">11</div></div>
<div class="a" style="left:737px;top:620px;width:31px;height:25px;background:#e4ecf7;border-bottom:1px solid #9eb6ce;border-right:1px solid #9eb6ce;overflow:hidden"><div class="a" style="left:0;width:31px;top:15.5px;text-align:center;font:16px/16px 'Liberation Serif';color:#27415f">12</div></div>
<div class="a" style="left:915px;top:501px;width:465px;height:89px;background:#ffff00"></div>
<div class="a" style="left:768px;top:291px;width:612px;height:1px;background:#000"></div>
<div class="a" style="left:768px;top:321px;width:612px;height:1px;background:#000"></div>
<div class="a" style="left:877px;top:351px;width:503px;height:1px;background:#000"></div>
<div class="a" style="left:877px;top:381px;width:503px;height:1px;background:#000"></div>
<div class="a" style="left:877px;top:411px;width:503px;height:1px;background:#000"></div>
<div class="a" style="left:768px;top:441px;width:612px;height:1px;background:#000"></div>
<div class="a" style="left:768px;top:500px;width:612px;height:1px;background:#000"></div>
<div class="a" style="left:877px;top:530px;width:503px;height:1px;background:#000"></div>
<div class="a" style="left:877px;top:560px;width:503px;height:1px;background:#000"></div>
<div class="a" style="left:877px;top:590px;width:503px;height:1px;background:#000"></div>
<div class="a" style="left:877px;top:620px;width:503px;height:1px;background:#000"></div>
<div class="a" style="left:877px;top:291px;width:1px;height:30px;background:#000"></div>
<div class="a" style="left:1086px;top:291px;width:1px;height:30px;background:#000"></div>
<div class="a" style="left:1167px;top:291px;width:1px;height:30px;background:#000"></div>
<div class="a" style="left:1288px;top:291px;width:1px;height:30px;background:#000"></div>
<div class="a" style="left:1377px;top:291px;width:1px;height:150px;background:#000"></div>
<div class="a" style="left:877px;top:321px;width:1px;height:120px;background:#000"></div>
<div class="a" style="left:914px;top:321px;width:1px;height:120px;background:#000"></div>
<div class="a" style="left:914px;top:441px;width:1px;height:59px;background:#000"></div>
<div class="a" style="left:877px;top:500px;width:1px;height:145px;background:#000"></div>
<div class="a" style="left:914px;top:500px;width:1px;height:145px;background:#000"></div>
<div class="a" style="left:876px;top:290px;width:212px;height:33px;border:1px solid #000"></div>
<div class="a" style="left:877px;top:291px;width:210px;height:31px;border:1px solid #fff"></div>
<div class="a" style="left:878px;top:292px;width:208px;height:29px;border:1px solid #000"></div>
<div class="a" style="left:1084px;top:318px;width:5px;height:5px;background:#000;border:1px solid #fff"></div>
<div class="a" style="left:1165px;top:264px;white-space:nowrap;font-size:22px;font-weight:bold;color:#000;letter-spacing:3.6px">预审指示</div>
<div class="a" style="left:789px;top:295px;white-space:nowrap;font-size:16px;font-weight:bold;color:#000;letter-spacing:1.8px">产品编号</div>
<div class="a" style="left:938px;top:298px;white-space:nowrap;font:bold 15px Liberation Serif;color:#000;letter-spacing:1.2px">8S34301SA0</div>
<div class="a" style="left:1093px;top:295px;white-space:nowrap;font-size:16px;color:#000;font-weight:bold;letter-spacing:1.5px">预审日期</div>
<div class="a" style="left:1193px;top:298px;white-space:nowrap;font:bold 15px Liberation Serif;color:#000;letter-spacing:2.9px">2017/3/2</div>
<div class="a" style="left:1307px;top:295px;white-space:nowrap;font-size:16px;color:#000;font-weight:bold;letter-spacing:2.1px">预审人</div>
<div class="a" style="left:879px;top:324px;white-space:nowrap;font-size:16px;color:#000;letter-spacing:0.5px">序号</div>
<div class="a" style="left:1026px;top:324px;white-space:nowrap;font-size:16px;color:#0000c0;font-weight:bold;letter-spacing:1.33px">待与客户确认问题(原因与内容)</div>
<div class="a" style="left:891px;top:359px;white-space:nowrap;font:16px Liberation Serif;color:#000">1</div>
<div class="a" style="left:891px;top:389px;white-space:nowrap;font:16px Liberation Serif;color:#000">2</div>
<div class="a" style="left:891px;top:419px;white-space:nowrap;font:16px Liberation Serif;color:#000">3</div>
<div class="a" style="left:772px;top:362px;white-space:nowrap;font-size:16px;line-height:19px;color:#0000c0;font-weight:bold;letter-spacing:1.6px">待确认光绘时<br>一起确认问题</div>
<div class="a" style="left:772px;top:444px;white-space:nowrap;font-size:15px;line-height:17.5px;color:#000;font-weight:bold;letter-spacing:1.2px">工艺流程指示（<span style="color:#0000c0">备</span><br><span style="color:#0000c0">注工艺评审后的流</span><br><span style="color:#0000c0">程要求</span>）</div>
<div class="a" style="left:772px;top:568px;white-space:nowrap;font-size:15px;line-height:18px;color:#000;font-weight:bold;letter-spacing:0.6px"><span style="font-family:Liberation Serif">CAM</span>指示（<span style="color:#0000c0">备</span><br><span style="color:#0000c0">注需要<span style="font-family:Liberation Serif">CAM</span>注</span><br><span style="color:#0000c0">意和更改的要</span><br><span style="color:#0000c0">求</span>）</div>
<div class="a" style="left:891px;top:508px;white-space:nowrap;font:bold 16px Liberation Serif;color:#000">1</div>
<div class="a" style="left:891px;top:538px;white-space:nowrap;font:bold 16px Liberation Serif;color:#000">2</div>
<div class="a" style="left:891px;top:568px;white-space:nowrap;font:bold 16px Liberation Serif;color:#000">3</div>
<div class="a" style="left:891px;top:598px;white-space:nowrap;font:bold 16px Liberation Serif;color:#000">4</div>
<div class="a" style="left:891px;top:628px;white-space:nowrap;font:bold 16px Liberation Serif;color:#000">5</div>
<div class="a" style="left:918px;top:504px;white-space:nowrap;font-size:14px;font-weight:bold;color:#000">外形以<span style="font-family:Liberation Serif">gko</span>层为准，忽略<span style="font-family:Liberation Serif">gm1</span>层</div>
<div class="a" style="left:918px;top:534px;white-space:nowrap;font-size:14px;font-weight:bold;color:#000"><span style="font-family:Liberation Serif">gko</span>层<span style="font-family:Liberation Serif">8</span>个圆圈对应的钻孔按非金属打孔</div>
<div class="a" style="left:918px;top:564px;white-space:nowrap;font-size:14px;font-weight:bold;color:#000">完成铜厚<span style="font-family:Liberation Serif">35um</span></div>
<div class="a" style="left:892px;top:493px;width:334px;height:68px;border:3px solid #d42222;box-shadow:inset 3px 3px 4px rgba(0,0,0,0.28),2px 3px 4px rgba(0,0,0,0.35)"></div>
<div class="a" style="left:736px;top:645px;width:644px;height:16px;background:linear-gradient(#e8f0fa,#cddcee);border-top:1px solid #9eb6ce"></div>
<svg class="a" style="left:740px;top:648px" width="55" height="10"><path d="M2 1 v8 M9 1 v8 l-6 -4z M20 1 v8 l-6 -4z M27 1 v8 l6 -4z M38 1 v8 l6 -4z M45 1 v8" stroke="#27417f" fill="#27417f"/></svg>
<div class="a" style="left:798px;top:645px;width:60px;height:16px;background:#fff;border-left:1px solid #9eb6ce;border-right:1px solid #9eb6ce"></div>
<div class="a" style="left:807px;top:646px;white-space:nowrap;font:13px/14px Liberation Serif;color:#27415f;letter-spacing:1px">Sheet1</div>
<div class="a" style="left:865px;top:646px;white-space:nowrap;font:13px/14px Liberation Serif;color:#27415f;letter-spacing:1px">Sheet2</div>
<div class="a" style="left:922px;top:646px;white-space:nowrap;font:13px/14px Liberation Serif;color:#27415f;letter-spacing:1px">Sheet3</div>
<svg class="a" style="left:852px;top:646px" width="10" height="15"><path d="M0 15 L9 0" stroke="#8aa0bc"/></svg>
<svg class="a" style="left:909px;top:646px" width="10" height="15"><path d="M0 15 L9 0" stroke="#8aa0bc"/></svg>
<svg class="a" style="left:966px;top:646px" width="10" height="15"><path d="M0 15 L9 0" stroke="#8aa0bc"/></svg>
<svg class="a" style="left:982px;top:647px" width="16" height="12"><path d="M4 3 h8 l3 3 v5 h-11z" fill="#fff" stroke="#888"/><circle cx="4" cy="3" r="2.5" fill="#f0c020"/></svg>
<div class="a" style="left:1155px;top:645px;width:225px;height:16px;background:linear-gradient(#b4cae8,#9cb6dc);border-top:1px solid #8aa4c8"></div>
<div class="a" style="left:1158px;top:646px;width:6px;height:14px;background:#f4f8fc;border:1px solid #9ab0cc"></div>
<div class="a" style="left:1160px;top:649px;width:1px;height:8px;background:#334"></div>
<svg class="a" style="left:1172px;top:648px" width="6" height="10"><path d="M5 0 v9 l-5 -4.5z" fill="#556"/></svg>
<div class="a" style="left:1184px;top:646px;width:141px;height:14px;background:linear-gradient(#f0f4f8,#cfd8e4);border:1px solid #7890b0;border-radius:2px"></div>
<div class="a" style="left:1246px;top:647px;white-space:nowrap;font-size:8px;color:#778">|||</div>
<div class="a" style="left:734px;top:661px;width:646px;height:22px;background:linear-gradient(#dae7f7,#c6d9f1 50%,#b6cce8)"></div>
<div class="a" style="left:1190px;top:661px;width:190px;height:22px;background:linear-gradient(#c4d8f2,#a8c2e6 60%,#b4cbea)"></div>
<div class="a" style="left:742px;top:663px;white-space:nowrap;font-size:12px;color:#27415f">就绪</div>
<div class="a" style="left:772px;top:663px;width:1px;height:18px;background:#a4bad4"></div>
<div class="a" style="left:1188px;top:663px;width:1px;height:18px;background:#a4bad4"></div>
<div class="a" style="left:1196px;top:663px;width:57px;height:17px;border:1px solid #d0dcec;background:rgba(255,255,255,0.25)"></div>
<div class="a" style="left:1197px;top:663px;width:18px;height:17px;background:linear-gradient(#fde8a8,#f9c050);border:1px solid #d8b870"></div>
<svg class="a" style="left:1199px;top:665px" width="14" height="13"><rect x="1" y="1" width="12" height="11" fill="#fff" stroke="#444"/><path d="M1 4.5 h12 M1 8 h12 M5 1 v11 M9 1 v11" stroke="#444"/></svg>
<svg class="a" style="left:1218px;top:665px" width="14" height="13"><rect x="1" y="1" width="12" height="11" fill="#ccc" stroke="#444"/><rect x="4" y="3" width="6" height="7" fill="#fff" stroke="#555"/></svg>
<svg class="a" style="left:1237px;top:665px" width="14" height="13"><rect x="1" y="1" width="12" height="11" fill="#aaa" stroke="#444"/><rect x="3" y="2" width="3" height="6" fill="#fff"/><rect x="7" y="2" width="4" height="6" fill="#fff"/></svg>
<div class="a" style="left:1261px;top:663px;white-space:nowrap;font-size:13.5px;color:#1a3a6a">100%</div>
<svg class="a" style="left:1300px;top:663px" width="80" height="18"><circle cx="9" cy="9" r="7" fill="#eef2f8" stroke="#556"/><path d="M5 9 h8" stroke="#222" stroke-width="1.5"/><path d="M18 9 h62" stroke="#8a9aae"/><path d="M63 3 h7 v8 l-3.5 4 -3.5 -4z" fill="#f4f6fa" stroke="#556"/></svg>
<div class="a" style="left:729px;top:683px;width:660px;height:6px;background:#2a2c2e"></div>
<div class="a" style="left:734px;top:682px;width:646px;height:1px;background:#eaf0f8"></div>
</body></html>
